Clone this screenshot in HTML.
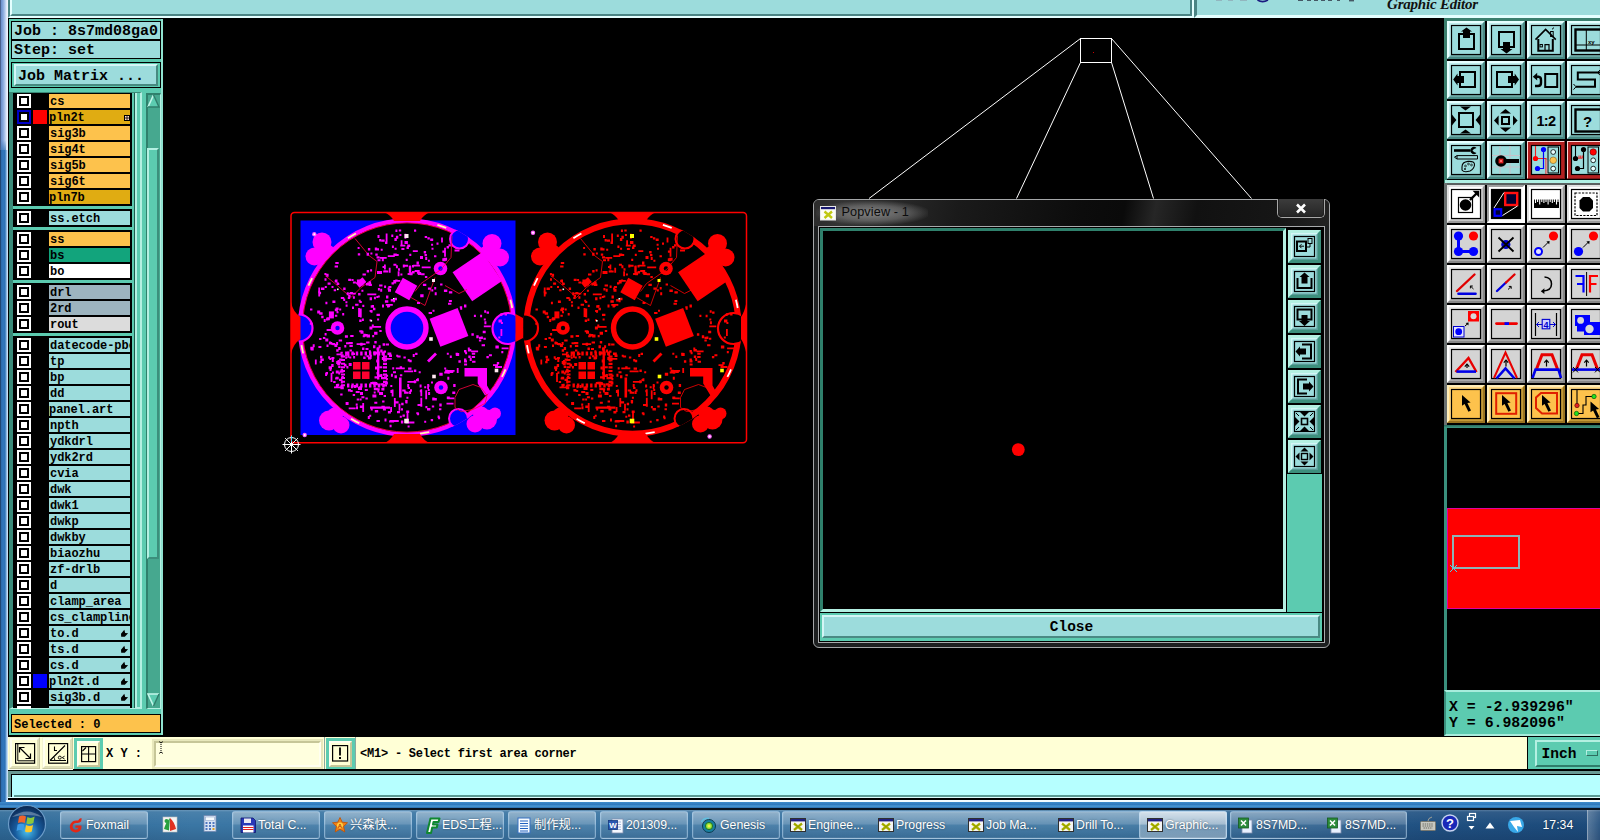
<!DOCTYPE html>
<html><head><meta charset="utf-8"><title>Graphic Editor</title>
<style>
html,body{margin:0;padding:0}
body{width:1600px;height:840px;overflow:hidden;background:#000;position:relative;font-family:"Liberation Mono",monospace;}
div,svg,span{position:absolute;box-sizing:border-box}
.m{font-family:"Liberation Mono",monospace;font-weight:bold;color:#000;white-space:pre;line-height:1}
.tb{font-family:"Liberation Sans","Noto Sans CJK SC",sans-serif;color:#fff;font-size:14px;white-space:pre;line-height:1}

.tbb{border:1px solid rgba(190,220,245,.55);border-radius:3px;background:linear-gradient(180deg,rgba(255,255,255,.42) 0,rgba(255,255,255,.25) 45%,rgba(255,255,255,.12) 52%,rgba(255,255,255,.05) 100%);box-shadow:inset 0 0 0 1px rgba(255,255,255,.08)}
.tbt{font-family:"Liberation Sans","Noto Sans CJK SC",sans-serif;color:#fff;font-size:12.3px;white-space:pre;line-height:1;text-shadow:0 0 2px rgba(0,0,0,.5)}
</style></head>
<body>
<!-- s_frame -->
<div style="left:0px;top:0px;width:8px;height:150px;background:linear-gradient(90deg,#2a3654 0,#6a8ecb 1px,#86a8dc 3px,#b4caee 5px,#dfe9fa 6.5px,#f4f8ff 8px);"></div>
<div style="left:0px;top:140px;width:8px;height:16px;background:linear-gradient(180deg,rgba(47,112,178,0),rgba(47,112,178,1));left:1px;width:5px;"></div>
<div style="left:0px;top:150px;width:8px;height:690px;background:linear-gradient(90deg,#14243c 0,#2b68aa 1px,#3277bc 3px,#2f72b6 5px,#8fbbe6 6.5px,#e4f0fc 8px);"></div>
<div style="left:8px;top:0px;width:1186px;height:18px;background:#9cdcdc;border-left:2px solid #4b8585;border-right:2px solid #e4ffff;border-bottom:2px solid #e4ffff;"><div style="left:0px;top:0px;width:1182px;height:16px;background:#9cdcdc;border-left:2px solid #e4ffff;border-right:2px solid #4b8585;border-bottom:2px solid #4b8585;"></div></div>
<div style="left:1194px;top:0px;width:406px;height:18px;background:#9cdcdc;border-left:3px solid #4b8585;border-bottom:3px solid #e4ffff;"></div>
<span style="left:1387px;top:-3.2px;font-family:'Liberation Serif',serif;font-style:italic;font-weight:bold;font-size:15px;color:#111;white-space:pre;line-height:1;letter-spacing:-0.2px">Graphic Editor</span>
<svg style="left:1210px;top:0px;" width="150" height="4" viewBox="1210 0 150 4"><g fill="#8a98a8" opacity=".55"><rect x="1216" y="0" width="6" height="1"/><rect x="1228" y="0" width="5" height="1"/><rect x="1240" y="0" width="7" height="1"/></g><path d="M1257.5 0 Q1262.5 3.2 1268 0" fill="none" stroke="#1a1a80" stroke-width="1.6"/><g fill="#303848" opacity=".8"><rect x="1298" y="0" width="5" height="1"/><rect x="1307" y="0" width="4" height="1"/><rect x="1314" y="0" width="4" height="1"/><rect x="1321" y="0" width="4" height="1"/><rect x="1328" y="0" width="4" height="1"/><rect x="1337" y="0" width="3" height="1"/><rect x="1349" y="0" width="5" height="1.4"/></g></svg>
<!-- s_left -->
<div style="left:8px;top:18px;width:156px;height:719px;background:#000;"></div>
<div style="left:9px;top:19px;width:154px;height:716px;background:#5ccbb0;border-right:2px solid #8fe2cf;"></div>
<div style="left:11px;top:21px;width:150px;height:19px;background:#9cdcdc;border:1px solid #000;"><span class="m" style="left:2px;top:2.3px;font-size:15px;letter-spacing:0px">Job : 8s7md08ga0</span></div>
<div style="left:11px;top:40px;width:150px;height:19px;background:#9cdcdc;border:1px solid #000;"><span class="m" style="left:2px;top:2.3px;font-size:15px;">Step: set</span></div>
<div style="left:11px;top:62px;width:150px;height:26px;background:#5ccbb0;border:1px solid #000;"></div>
<div style="left:14px;top:64px;width:144px;height:22px;background:#9cdcdc;border-style:solid;border-width:2px;border-color:#d4f6f6 #478a80 #478a80 #d4f6f6;"><span class="m" style="left:2px;top:3px;font-size:15px;">Job Matrix ...</span></div>
<div style="left:9px;top:92px;width:133px;height:617px;background:#5ccbb0;border-left:4px solid #3a8a78;border-top:1px solid #3a8a78;border-right:2px solid #b4f0e2;border-bottom:2px solid #b4f0e2;"></div>
<div style="left:13px;top:93px;width:124px;height:615px;background:#5ccbb0;border-right:2px solid #b4f0e2;"></div>
<div style="left:134px;top:93px;width:1px;height:615px;background:#1f5a4c;"></div>
<div style="left:13px;top:93px;width:119px;height:615px;background:#000;"></div>
<div style="left:17px;top:94px;width:14px;height:14px;background:#fff;"><div style="left:2px;top:2px;width:10px;height:10px;background:#000;"><div style="left:2px;top:2px;width:6px;height:6px;background:#fff;"></div></div></div>
<div style="left:49px;top:94px;width:81px;height:14px;background:#fdc24c;overflow:hidden;"><span class="m" style="left:1px;top:2px;font-size:12px;letter-spacing:-0.05px">cs</span></div>
<div style="left:17px;top:110px;width:14px;height:14px;background:#0000c8;"><div style="left:2px;top:2px;width:10px;height:10px;background:#000;"><div style="left:2px;top:2px;width:6px;height:6px;background:#fff;"></div></div></div>
<div style="left:33px;top:110px;width:14px;height:14px;background:#ff0000;"></div>
<div style="left:49px;top:110px;width:81px;height:14px;background:#e0ac12;overflow:hidden;"><span class="m" style="left:0px;top:2px;font-size:12px;letter-spacing:-0.05px">pln2t</span><svg style="left:75px;top:5px;" width="6" height="6"><rect x="0" y="0" width="6" height="6" fill="#000"/><rect x="1" y="1" width="1.6" height="1.6" fill="#fdc"/><rect x="3.4" y="1" width="1.6" height="1.6" fill="#fdc"/><rect x="1" y="3.4" width="1.6" height="1.6" fill="#fdc"/><rect x="3.4" y="3.4" width="1.6" height="1.6" fill="#fdc"/></svg></div>
<div style="left:17px;top:126px;width:14px;height:14px;background:#fff;"><div style="left:2px;top:2px;width:10px;height:10px;background:#000;"><div style="left:2px;top:2px;width:6px;height:6px;background:#fff;"></div></div></div>
<div style="left:49px;top:126px;width:81px;height:14px;background:#fdc24c;overflow:hidden;"><span class="m" style="left:1px;top:2px;font-size:12px;letter-spacing:-0.05px">sig3b</span></div>
<div style="left:17px;top:142px;width:14px;height:14px;background:#fff;"><div style="left:2px;top:2px;width:10px;height:10px;background:#000;"><div style="left:2px;top:2px;width:6px;height:6px;background:#fff;"></div></div></div>
<div style="left:49px;top:142px;width:81px;height:14px;background:#fdc24c;overflow:hidden;"><span class="m" style="left:1px;top:2px;font-size:12px;letter-spacing:-0.05px">sig4t</span></div>
<div style="left:17px;top:158px;width:14px;height:14px;background:#fff;"><div style="left:2px;top:2px;width:10px;height:10px;background:#000;"><div style="left:2px;top:2px;width:6px;height:6px;background:#fff;"></div></div></div>
<div style="left:49px;top:158px;width:81px;height:14px;background:#fdc24c;overflow:hidden;"><span class="m" style="left:1px;top:2px;font-size:12px;letter-spacing:-0.05px">sig5b</span></div>
<div style="left:17px;top:174px;width:14px;height:14px;background:#fff;"><div style="left:2px;top:2px;width:10px;height:10px;background:#000;"><div style="left:2px;top:2px;width:6px;height:6px;background:#fff;"></div></div></div>
<div style="left:49px;top:174px;width:81px;height:14px;background:#fdc24c;overflow:hidden;"><span class="m" style="left:1px;top:2px;font-size:12px;letter-spacing:-0.05px">sig6t</span></div>
<div style="left:17px;top:190px;width:14px;height:14px;background:#fff;"><div style="left:2px;top:2px;width:10px;height:10px;background:#000;"><div style="left:2px;top:2px;width:6px;height:6px;background:#fff;"></div></div></div>
<div style="left:49px;top:190px;width:81px;height:14px;background:#e0ac12;overflow:hidden;"><span class="m" style="left:0px;top:2px;font-size:12px;letter-spacing:-0.05px">pln7b</span></div>
<div style="left:17px;top:211px;width:14px;height:14px;background:#fff;"><div style="left:2px;top:2px;width:10px;height:10px;background:#000;"><div style="left:2px;top:2px;width:6px;height:6px;background:#fff;"></div></div></div>
<div style="left:49px;top:211px;width:81px;height:14px;background:#9cdcdc;overflow:hidden;"><span class="m" style="left:1px;top:2px;font-size:12px;letter-spacing:-0.05px">ss.etch</span></div>
<div style="left:17px;top:232px;width:14px;height:14px;background:#fff;"><div style="left:2px;top:2px;width:10px;height:10px;background:#000;"><div style="left:2px;top:2px;width:6px;height:6px;background:#fff;"></div></div></div>
<div style="left:49px;top:232px;width:81px;height:14px;background:#fdc24c;overflow:hidden;"><span class="m" style="left:1px;top:2px;font-size:12px;letter-spacing:-0.05px">ss</span></div>
<div style="left:17px;top:248px;width:14px;height:14px;background:#fff;"><div style="left:2px;top:2px;width:10px;height:10px;background:#000;"><div style="left:2px;top:2px;width:6px;height:6px;background:#fff;"></div></div></div>
<div style="left:49px;top:248px;width:81px;height:14px;background:#12a47c;overflow:hidden;"><span class="m" style="left:1px;top:2px;font-size:12px;letter-spacing:-0.05px">bs</span></div>
<div style="left:17px;top:264px;width:14px;height:14px;background:#fff;"><div style="left:2px;top:2px;width:10px;height:10px;background:#000;"><div style="left:2px;top:2px;width:6px;height:6px;background:#fff;"></div></div></div>
<div style="left:49px;top:264px;width:81px;height:14px;background:#ffffff;overflow:hidden;"><span class="m" style="left:1px;top:2px;font-size:12px;letter-spacing:-0.05px">bo</span></div>
<div style="left:17px;top:285px;width:14px;height:14px;background:#fff;"><div style="left:2px;top:2px;width:10px;height:10px;background:#000;"><div style="left:2px;top:2px;width:6px;height:6px;background:#fff;"></div></div></div>
<div style="left:49px;top:285px;width:81px;height:14px;background:#9db4bf;overflow:hidden;"><span class="m" style="left:1px;top:2px;font-size:12px;letter-spacing:-0.05px">drl</span></div>
<div style="left:17px;top:301px;width:14px;height:14px;background:#fff;"><div style="left:2px;top:2px;width:10px;height:10px;background:#000;"><div style="left:2px;top:2px;width:6px;height:6px;background:#fff;"></div></div></div>
<div style="left:49px;top:301px;width:81px;height:14px;background:#9db4bf;overflow:hidden;"><span class="m" style="left:1px;top:2px;font-size:12px;letter-spacing:-0.05px">2rd</span></div>
<div style="left:17px;top:317px;width:14px;height:14px;background:#fff;"><div style="left:2px;top:2px;width:10px;height:10px;background:#000;"><div style="left:2px;top:2px;width:6px;height:6px;background:#fff;"></div></div></div>
<div style="left:49px;top:317px;width:81px;height:14px;background:#dcdcdc;overflow:hidden;"><span class="m" style="left:1px;top:2px;font-size:12px;letter-spacing:-0.05px">rout</span></div>
<div style="left:17px;top:338px;width:14px;height:14px;background:#fff;"><div style="left:2px;top:2px;width:10px;height:10px;background:#000;"><div style="left:2px;top:2px;width:6px;height:6px;background:#fff;"></div></div></div>
<div style="left:49px;top:338px;width:81px;height:14px;background:#9cdcdc;overflow:hidden;"><span class="m" style="left:1px;top:2px;font-size:12px;letter-spacing:-0.05px">datecode-pbc</span></div>
<div style="left:17px;top:354px;width:14px;height:14px;background:#fff;"><div style="left:2px;top:2px;width:10px;height:10px;background:#000;"><div style="left:2px;top:2px;width:6px;height:6px;background:#fff;"></div></div></div>
<div style="left:49px;top:354px;width:81px;height:14px;background:#9cdcdc;overflow:hidden;"><span class="m" style="left:1px;top:2px;font-size:12px;letter-spacing:-0.05px">tp</span></div>
<div style="left:17px;top:370px;width:14px;height:14px;background:#fff;"><div style="left:2px;top:2px;width:10px;height:10px;background:#000;"><div style="left:2px;top:2px;width:6px;height:6px;background:#fff;"></div></div></div>
<div style="left:49px;top:370px;width:81px;height:14px;background:#9cdcdc;overflow:hidden;"><span class="m" style="left:1px;top:2px;font-size:12px;letter-spacing:-0.05px">bp</span></div>
<div style="left:17px;top:386px;width:14px;height:14px;background:#fff;"><div style="left:2px;top:2px;width:10px;height:10px;background:#000;"><div style="left:2px;top:2px;width:6px;height:6px;background:#fff;"></div></div></div>
<div style="left:49px;top:386px;width:81px;height:14px;background:#9cdcdc;overflow:hidden;"><span class="m" style="left:1px;top:2px;font-size:12px;letter-spacing:-0.05px">dd</span></div>
<div style="left:17px;top:402px;width:14px;height:14px;background:#fff;"><div style="left:2px;top:2px;width:10px;height:10px;background:#000;"><div style="left:2px;top:2px;width:6px;height:6px;background:#fff;"></div></div></div>
<div style="left:49px;top:402px;width:81px;height:14px;background:#9cdcdc;overflow:hidden;"><span class="m" style="left:0px;top:2px;font-size:12px;letter-spacing:-0.05px">panel.art</span></div>
<div style="left:17px;top:418px;width:14px;height:14px;background:#fff;"><div style="left:2px;top:2px;width:10px;height:10px;background:#000;"><div style="left:2px;top:2px;width:6px;height:6px;background:#fff;"></div></div></div>
<div style="left:49px;top:418px;width:81px;height:14px;background:#9cdcdc;overflow:hidden;"><span class="m" style="left:1px;top:2px;font-size:12px;letter-spacing:-0.05px">npth</span></div>
<div style="left:17px;top:434px;width:14px;height:14px;background:#fff;"><div style="left:2px;top:2px;width:10px;height:10px;background:#000;"><div style="left:2px;top:2px;width:6px;height:6px;background:#fff;"></div></div></div>
<div style="left:49px;top:434px;width:81px;height:14px;background:#9cdcdc;overflow:hidden;"><span class="m" style="left:1px;top:2px;font-size:12px;letter-spacing:-0.05px">ydkdrl</span></div>
<div style="left:17px;top:450px;width:14px;height:14px;background:#fff;"><div style="left:2px;top:2px;width:10px;height:10px;background:#000;"><div style="left:2px;top:2px;width:6px;height:6px;background:#fff;"></div></div></div>
<div style="left:49px;top:450px;width:81px;height:14px;background:#9cdcdc;overflow:hidden;"><span class="m" style="left:1px;top:2px;font-size:12px;letter-spacing:-0.05px">ydk2rd</span></div>
<div style="left:17px;top:466px;width:14px;height:14px;background:#fff;"><div style="left:2px;top:2px;width:10px;height:10px;background:#000;"><div style="left:2px;top:2px;width:6px;height:6px;background:#fff;"></div></div></div>
<div style="left:49px;top:466px;width:81px;height:14px;background:#9cdcdc;overflow:hidden;"><span class="m" style="left:1px;top:2px;font-size:12px;letter-spacing:-0.05px">cvia</span></div>
<div style="left:17px;top:482px;width:14px;height:14px;background:#fff;"><div style="left:2px;top:2px;width:10px;height:10px;background:#000;"><div style="left:2px;top:2px;width:6px;height:6px;background:#fff;"></div></div></div>
<div style="left:49px;top:482px;width:81px;height:14px;background:#9cdcdc;overflow:hidden;"><span class="m" style="left:1px;top:2px;font-size:12px;letter-spacing:-0.05px">dwk</span></div>
<div style="left:17px;top:498px;width:14px;height:14px;background:#fff;"><div style="left:2px;top:2px;width:10px;height:10px;background:#000;"><div style="left:2px;top:2px;width:6px;height:6px;background:#fff;"></div></div></div>
<div style="left:49px;top:498px;width:81px;height:14px;background:#9cdcdc;overflow:hidden;"><span class="m" style="left:1px;top:2px;font-size:12px;letter-spacing:-0.05px">dwk1</span></div>
<div style="left:17px;top:514px;width:14px;height:14px;background:#fff;"><div style="left:2px;top:2px;width:10px;height:10px;background:#000;"><div style="left:2px;top:2px;width:6px;height:6px;background:#fff;"></div></div></div>
<div style="left:49px;top:514px;width:81px;height:14px;background:#9cdcdc;overflow:hidden;"><span class="m" style="left:1px;top:2px;font-size:12px;letter-spacing:-0.05px">dwkp</span></div>
<div style="left:17px;top:530px;width:14px;height:14px;background:#fff;"><div style="left:2px;top:2px;width:10px;height:10px;background:#000;"><div style="left:2px;top:2px;width:6px;height:6px;background:#fff;"></div></div></div>
<div style="left:49px;top:530px;width:81px;height:14px;background:#9cdcdc;overflow:hidden;"><span class="m" style="left:1px;top:2px;font-size:12px;letter-spacing:-0.05px">dwkby</span></div>
<div style="left:17px;top:546px;width:14px;height:14px;background:#fff;"><div style="left:2px;top:2px;width:10px;height:10px;background:#000;"><div style="left:2px;top:2px;width:6px;height:6px;background:#fff;"></div></div></div>
<div style="left:49px;top:546px;width:81px;height:14px;background:#9cdcdc;overflow:hidden;"><span class="m" style="left:1px;top:2px;font-size:12px;letter-spacing:-0.05px">biaozhu</span></div>
<div style="left:17px;top:562px;width:14px;height:14px;background:#fff;"><div style="left:2px;top:2px;width:10px;height:10px;background:#000;"><div style="left:2px;top:2px;width:6px;height:6px;background:#fff;"></div></div></div>
<div style="left:49px;top:562px;width:81px;height:14px;background:#9cdcdc;overflow:hidden;"><span class="m" style="left:1px;top:2px;font-size:12px;letter-spacing:-0.05px">zf-drlb</span></div>
<div style="left:17px;top:578px;width:14px;height:14px;background:#fff;"><div style="left:2px;top:2px;width:10px;height:10px;background:#000;"><div style="left:2px;top:2px;width:6px;height:6px;background:#fff;"></div></div></div>
<div style="left:49px;top:578px;width:81px;height:14px;background:#9cdcdc;overflow:hidden;"><span class="m" style="left:1px;top:2px;font-size:12px;letter-spacing:-0.05px">d</span></div>
<div style="left:17px;top:594px;width:14px;height:14px;background:#fff;"><div style="left:2px;top:2px;width:10px;height:10px;background:#000;"><div style="left:2px;top:2px;width:6px;height:6px;background:#fff;"></div></div></div>
<div style="left:49px;top:594px;width:81px;height:14px;background:#9cdcdc;overflow:hidden;"><span class="m" style="left:1px;top:2px;font-size:12px;letter-spacing:-0.05px">clamp_area</span></div>
<div style="left:17px;top:610px;width:14px;height:14px;background:#fff;"><div style="left:2px;top:2px;width:10px;height:10px;background:#000;"><div style="left:2px;top:2px;width:6px;height:6px;background:#fff;"></div></div></div>
<div style="left:49px;top:610px;width:81px;height:14px;background:#9cdcdc;overflow:hidden;"><span class="m" style="left:1px;top:2px;font-size:12px;letter-spacing:-0.05px">cs_clampline</span></div>
<div style="left:17px;top:626px;width:14px;height:14px;background:#fff;"><div style="left:2px;top:2px;width:10px;height:10px;background:#000;"><div style="left:2px;top:2px;width:6px;height:6px;background:#fff;"></div></div></div>
<div style="left:49px;top:626px;width:81px;height:14px;background:#9cdcdc;overflow:hidden;"><span class="m" style="left:1px;top:2px;font-size:12px;letter-spacing:-0.05px">to.d</span><svg style="left:71px;top:3px;" width="9" height="9"><path d="M4.3 0.8 L5.2 3.9 L8.1 4.3 L4.8 7.7 L1.2 7.7 L1 4.8 Z" fill="#000"/></svg></div>
<div style="left:17px;top:642px;width:14px;height:14px;background:#fff;"><div style="left:2px;top:2px;width:10px;height:10px;background:#000;"><div style="left:2px;top:2px;width:6px;height:6px;background:#fff;"></div></div></div>
<div style="left:49px;top:642px;width:81px;height:14px;background:#9cdcdc;overflow:hidden;"><span class="m" style="left:1px;top:2px;font-size:12px;letter-spacing:-0.05px">ts.d</span><svg style="left:71px;top:3px;" width="9" height="9"><path d="M4.3 0.8 L5.2 3.9 L8.1 4.3 L4.8 7.7 L1.2 7.7 L1 4.8 Z" fill="#000"/></svg></div>
<div style="left:17px;top:658px;width:14px;height:14px;background:#fff;"><div style="left:2px;top:2px;width:10px;height:10px;background:#000;"><div style="left:2px;top:2px;width:6px;height:6px;background:#fff;"></div></div></div>
<div style="left:49px;top:658px;width:81px;height:14px;background:#9cdcdc;overflow:hidden;"><span class="m" style="left:1px;top:2px;font-size:12px;letter-spacing:-0.05px">cs.d</span><svg style="left:71px;top:3px;" width="9" height="9"><path d="M4.3 0.8 L5.2 3.9 L8.1 4.3 L4.8 7.7 L1.2 7.7 L1 4.8 Z" fill="#000"/></svg></div>
<div style="left:17px;top:674px;width:14px;height:14px;background:#fff;"><div style="left:2px;top:2px;width:10px;height:10px;background:#000;"><div style="left:2px;top:2px;width:6px;height:6px;background:#fff;"></div></div></div>
<div style="left:33px;top:674px;width:14px;height:14px;background:#0000ff;"></div>
<div style="left:49px;top:674px;width:81px;height:14px;background:#9cdcdc;overflow:hidden;"><span class="m" style="left:0px;top:2px;font-size:12px;letter-spacing:-0.05px">pln2t.d</span><svg style="left:71px;top:3px;" width="9" height="9"><path d="M4.3 0.8 L5.2 3.9 L8.1 4.3 L4.8 7.7 L1.2 7.7 L1 4.8 Z" fill="#000"/></svg></div>
<div style="left:17px;top:690px;width:14px;height:14px;background:#fff;"><div style="left:2px;top:2px;width:10px;height:10px;background:#000;"><div style="left:2px;top:2px;width:6px;height:6px;background:#fff;"></div></div></div>
<div style="left:49px;top:690px;width:81px;height:14px;background:#9cdcdc;overflow:hidden;"><span class="m" style="left:1px;top:2px;font-size:12px;letter-spacing:-0.05px">sig3b.d</span><svg style="left:71px;top:3px;" width="9" height="9"><path d="M4.3 0.8 L5.2 3.9 L8.1 4.3 L4.8 7.7 L1.2 7.7 L1 4.8 Z" fill="#000"/></svg></div>
<div style="left:17px;top:706px;width:14px;height:3px;background:#fff;"></div>
<div style="left:49px;top:706px;width:81px;height:3px;background:#9cdcdc;overflow:hidden;"></div>
<div style="left:13px;top:206px;width:119px;height:3px;background:#5ccbb0;"></div>
<div style="left:13px;top:227px;width:119px;height:3px;background:#5ccbb0;"></div>
<div style="left:13px;top:280px;width:119px;height:3px;background:#5ccbb0;"></div>
<div style="left:13px;top:333px;width:119px;height:3px;background:#5ccbb0;"></div>
<div style="left:146px;top:93px;width:15px;height:616px;background:#46a88f;border-style:solid;border-width:2px 1px 1px 2px;border-color:#2f806c #b4f0e2 #b4f0e2 #2f806c;"></div>
<svg style="left:147px;top:94px;" width="13" height="15"><path d="M6.5 1 L1 13 L12 13 Z" fill="#5ccbb0"/><path d="M6.5 1 L1 13" stroke="#c4f6ea" stroke-width="1.6" fill="none"/><path d="M1 13 L12 13 L6.5 1" stroke="#2f7d6b" stroke-width="1.4" fill="none"/></svg>
<svg style="left:147px;top:692px;" width="13" height="15"><path d="M6.5 14 L1 2 L12 2 Z" fill="#5ccbb0"/><path d="M12 2 L1 2 L6.5 14" stroke="#c4f6ea" stroke-width="1.6" fill="none"/><path d="M6.5 14 L12 2" stroke="#2f7d6b" stroke-width="1.4" fill="none"/></svg>
<div style="left:147px;top:148px;width:12px;height:411px;background:#5ccbb0;border-style:solid;border-width:2px;border-color:#b4f0e2 #3c8f7c #3c8f7c #b4f0e2;"></div>
<div style="left:11px;top:714px;width:150px;height:19px;background:#fdc24c;border:1px solid #000;"><span class="m" style="left:2px;top:3.5px;font-size:12px;">Selected : 0</span></div>
<!-- s_canvas -->
<svg style="left:280px;top:200px;" width="480" height="260" viewBox="280 200 480 260"><defs><clipPath id="bc"><rect x="-106.5" y="-107" width="215" height="214.5"/></clipPath><clipPath id="dc"><circle cx="0" cy="0" r="109.2"/></clipPath></defs><g transform="translate(407,327.5)"><rect x="-106.5" y="-107" width="215" height="214.5" fill="#0000ff"/><circle cx="-85" cy="-85.5" r="9.5" fill="#ff00ff"/><circle cx="-92.5" cy="-71" r="9" fill="#ff00ff"/><circle cx="-80" cy="-75" r="8" fill="#ff00ff"/><circle cx="-71" cy="-70" r="6" fill="#ff00ff"/><circle cx="85" cy="-84" r="9.5" fill="#ff00ff"/><circle cx="93" cy="-70" r="9" fill="#ff00ff"/><circle cx="80" cy="-74" r="8" fill="#ff00ff"/><circle cx="71" cy="-70" r="6" fill="#ff00ff"/><circle cx="-78" cy="93" r="10" fill="#ff00ff"/><circle cx="-66" cy="97.5" r="8.5" fill="#ff00ff"/><circle cx="-72" cy="88" r="8" fill="#ff00ff"/><circle cx="80" cy="92" r="10" fill="#ff00ff"/><circle cx="68" cy="96.5" r="8.5" fill="#ff00ff"/><circle cx="74" cy="87" r="8" fill="#ff00ff"/><circle cx="88" cy="86" r="6" fill="#ff00ff"/><circle cx="0" cy="0" r="107.0" fill="#000" stroke="#ff00ff" stroke-width="4.4"/><circle cx="0" cy="0" r="104.6" fill="none" stroke="#ff0040" stroke-width="0.9"/><g clip-path="url(#dc)"><circle cx="-108" cy="0.5" r="13.5" fill="#0000ff" stroke="#ff00ff" stroke-width="2.2"/><circle cx="101" cy="1" r="15.5" fill="#0000ff" stroke="#ff00ff" stroke-width="2.2"/><circle cx="52.5" cy="-88.5" r="9.5" fill="#0000ff" stroke="#ff00ff" stroke-width="2"/><circle cx="51.5" cy="91" r="9.5" fill="#0000ff" stroke="#ff00ff" stroke-width="2"/></g><path d="M-59.1 -89.2 A107 107 0 0 1 -51.1 -94.0" stroke="#fff4b0" stroke-width="1.8" fill="none"/><path d="M30.4 -102.6 A107 107 0 0 1 39.2 -99.6" stroke="#fff4b0" stroke-width="1.8" fill="none"/><path d="M-98.5 -41.8 A107 107 0 0 1 -94.9 -49.4" stroke="#fff4b0" stroke-width="1.8" fill="none"/><path d="M103.4 -27.7 A107 107 0 0 1 105.2 -19.5" stroke="#fff4b0" stroke-width="1.8" fill="none"/><path d="M-103.8 25.9 A107 107 0 0 1 -105.5 17.7" stroke="#fff4b0" stroke-width="1.8" fill="none"/><path d="M-47.7 95.8 A107 107 0 0 1 -55.9 91.2" stroke="#fff4b0" stroke-width="1.8" fill="none"/><path d="M22.2 104.7 A107 107 0 0 1 13.0 106.2" stroke="#fff4b0" stroke-width="1.8" fill="none"/><path d="M98.5 41.8 A107 107 0 0 1 94.9 49.4" stroke="#fff4b0" stroke-width="1.8" fill="none"/><circle cx="0" cy="0.5" r="19" fill="#0000ff" stroke="#ff00ff" stroke-width="5.4"/><rect x="-18.0" y="-17.5" width="36.0" height="35.0" fill="#ff00ff" transform="translate(70.3,-50.9) rotate(-34)"/><rect x="-15.0" y="-15.0" width="30.0" height="30.0" fill="#ff00ff" transform="translate(42.0,-0.2) rotate(-21)"/><rect x="-8.2" y="-8.2" width="16.5" height="16.5" fill="#ff00ff" transform="translate(-1.0,-38.5) rotate(29)"/><rect x="-4.5" y="-3.0" width="9.0" height="6.0" fill="#ff00ff" transform="translate(-46.0,-45.0) rotate(-40)"/><rect x="-2.5" y="-3.5" width="5.0" height="7.0" fill="#ff00ff" transform="translate(-75.6,-12.6) rotate(0)"/><rect x="-2.5" y="-1.5" width="5.0" height="3.0" fill="#ff00ff" transform="translate(-27.5,-55.0) rotate(0)"/><circle cx="33.5" cy="-59" r="6.8" fill="#ff00ff"/><circle cx="33.5" cy="-59" r="2.2" fill="#0000ff"/><circle cx="-69.5" cy="0.5" r="6.8" fill="#ff00ff"/><circle cx="-69.5" cy="0.5" r="2.2" fill="#0000ff"/><circle cx="34" cy="60" r="6.8" fill="#ff00ff"/><circle cx="34" cy="60" r="2.2" fill="#0000ff"/><path d="M57.5 40.5 H80 V58 L84 65 L78 68 L70.7 56 V49 H57.5 Z" fill="#ff00ff"/><rect x="-54" y="34.5" width="7.5" height="7.5" fill="#ff0030"/><rect x="-45" y="34.5" width="7.5" height="7.5" fill="#ff0030"/><rect x="-54" y="44" width="7.5" height="7.5" fill="#ff0030"/><rect x="-45" y="44" width="7.5" height="7.5" fill="#ff0030"/><path d="M-60.0 24h2.4v4h-2.4z M-60.0 56h2.4v4h-2.4zM-66 28.0h4v2h-4z M-24 28.0h4v2.2h-4zM-55.6 24h2.4v4h-2.4z M-55.6 56h2.4v4h-2.4zM-66 31.6h4v2h-4z M-24 31.6h4v2.2h-4zM-51.2 24h2.4v4h-2.4z M-51.2 56h2.4v4h-2.4zM-66 35.2h4v2h-4z M-24 35.2h4v2.2h-4zM-46.8 24h2.4v4h-2.4z M-46.8 56h2.4v4h-2.4zM-66 38.8h4v2h-4z M-24 38.8h4v2.2h-4zM-42.4 24h2.4v4h-2.4z M-42.4 56h2.4v4h-2.4zM-66 42.4h4v2h-4z M-24 42.4h4v2.2h-4zM-38.0 24h2.4v4h-2.4z M-38.0 56h2.4v4h-2.4zM-66 46.0h4v2h-4z M-24 46.0h4v2.2h-4zM-33.6 24h2.4v4h-2.4z M-33.6 56h2.4v4h-2.4zM-66 49.6h4v2h-4z M-24 49.6h4v2.2h-4zM-29.2 24h2.4v4h-2.4z M-29.2 56h2.4v4h-2.4zM-66 53.2h4v2h-4z M-24 53.2h4v2.2h-4zM-24.8 24h2.4v4h-2.4z M-24.8 56h2.4v4h-2.4zM-66 56.8h4v2h-4z M-24 56.8h4v2.2h-4z" fill="#ff00ff"/><path d="M-30 20 h2.4 v32 h-2.4z M-8 50 h2.6 v20 h-2.6z M-37 79 h20 v2.2 h-20z M20 33 l8 -8 l2 2 l-8 8z" fill="#ff00ff"/><path d="M-52 -89 L-38 -72 L-30 -66 L-32 -50 L-46 -40 L-56 -30 L-72 -44 L-82 -52 M45 -92 L44 -70 L34 -58 L14 -44 L8 -36 M4 -30 L18 -22 L28 -50 M38 -42 L52 -34 L60 -38 M48 70 L52 62 L66 57 L74 60 L80 68 L78 76 L66 82 L54 84 L48 80 Z" fill="none" stroke="#ff0040" stroke-width="0.8"/><path d="M-70.8 21.8h2.4v2.4h-2.4zM-36.3 -22.2h3v2.4h-3zM-9.8 28.1h3.4v2h-3.4zM-5.6 -79.6h3v2h-3zM9.9 -55.7h3v2h-3zM-44.5 -54.0h3.4v2h-3.4zM-17.4 97.3h2v2.4h-2zM6.8 52.8h2v3h-2zM-73.8 53.4h2.4v2h-2.4zM23.7 91.4h2.4v2.4h-2.4zM-21.4 16.1h3.4v2h-3.4zM-3.6 29.0h2.4v2h-2.4zM0.7 31.5h2v2.4h-2zM-40.9 14.0h3.4v2h-3.4zM-82.6 -54.4h2v2h-2zM76.8 -2.0h7v1.8h-7zM-4.5 86.9h2.4v2.4h-2.4zM-53.0 57.4h2v3h-2zM-82.2 -41.6h2v2h-2zM10.5 76.6h3.4v2h-3.4zM-23.8 -56.9h5v1.8h-5zM94.3 23.4h2v2.4h-2zM-11.2 39.9h9v1.8h-9zM-17.9 93.1h5v1.8h-5zM40.4 43.8h2.4v2.4h-2.4zM-27.3 -70.6h7v1.8h-7zM-29.5 -92.6h2v3h-2zM-84.1 9.4h2.4v2h-2.4zM65.1 33.3h3.4v2h-3.4zM-6.7 -82.8h5v1.8h-5zM23.2 -89.0h3v2.4h-3zM-2.9 63.8h2.4v2.4h-2.4zM-23.0 -62.9h1.8v5h-1.8zM-10.8 27.2h2v2h-2zM-36.9 -58.3h2v2.4h-2zM-19.4 -40.1h2v2.4h-2zM-87.3 33.4h2.4v2.4h-2.4zM20.7 61.6h2v2h-2zM-48.3 -27.8h2v2h-2zM47.5 -77.9h5v1.8h-5zM-80.5 -10.2h3.4v3h-3.4zM-19.2 -72.3h7v1.8h-7zM32.0 80.7h2.4v2h-2.4zM-38.3 -46.3h2v2h-2zM-41.3 6.5h2v2.4h-2zM13.0 -71.6h3v3h-3zM2.4 -62.1h1.8v9h-1.8zM30.6 88.1h2v2.4h-2zM-40.3 -57.5h2.4v2.4h-2.4zM3.0 61.8h2v2.4h-2zM14.2 -54.2h3.4v2h-3.4zM57.0 32.7h3v2.4h-3zM-44.7 75.6h1.8v9h-1.8zM-81.0 -9.3h2.4v2.4h-2.4zM-32.2 -79.9h2.4v3h-2.4zM41.9 -27.6h3v2h-3zM46.2 56.6h2.4v3h-2.4zM-28.4 17.7h2v3h-2zM-40.5 27.8h2.4v2h-2.4zM49.8 40.4h1.8v5h-1.8zM-79.4 -45.1h3v2.4h-3zM-27.9 -88.5h2v2.4h-2zM35.3 -69.2h3.4v3h-3.4zM-89.8 -16.9h3v3h-3zM9.3 84.7h2.4v2h-2.4zM-37.8 87.3h2v2h-2zM-77.5 41.6h2v2h-2zM24.8 77.9h2.4v2h-2.4zM-38.5 -43.4h3.4v2h-3.4zM5.8 -77.3h5v1.8h-5zM-16.8 79.5h1.8v5h-1.8zM5.2 -56.4h2.4v2.4h-2.4zM-69.5 32.6h2v2h-2zM-4.2 -62.9h2v3h-2zM-25.8 -88.1h3.4v2.4h-3.4zM27.4 70.5h2.4v2.4h-2.4zM38.1 42.2h3v2.4h-3zM6.0 -62.8h7v1.8h-7zM93.9 -5.6h2v2h-2zM13.4 61.7h1.8v7h-1.8zM7.2 -97.7h2v2h-2zM20.4 57.1h2v2.4h-2zM-97.2 -4.8h3v2h-3zM10.0 -25.4h3v2h-3zM57.0 -23.1h2.4v3h-2.4zM89.8 34.6h2.4v2.4h-2.4zM-48.9 -34.5h2.4v2.4h-2.4zM-48.9 -19.6h1.8v9h-1.8zM1.8 -61.8h1.8v7h-1.8zM-61.8 29.3h2v2h-2zM-96.0 19.3h2v3h-2zM60.8 19.9h2v2h-2zM-24.2 30.5h9v1.8h-9zM-5.8 75.3h2.4v2.4h-2.4zM-97.0 -19.0h2.4v2h-2.4zM16.7 -76.5h2.4v2.4h-2.4zM-29.5 -68.3h3v2h-3zM0.6 98.0h2v2h-2zM9.0 51.5h2v2h-2zM-41.1 -44.4h2.4v2.4h-2.4zM-47.4 71.1h2v2h-2zM39.6 -81.5h2.4v2.4h-2.4zM-29.6 24.5h2v3h-2zM-81.6 -25.7h2v2.4h-2zM-58.8 -32.6h2.4v2h-2.4zM-67.9 30.9h3.4v2.4h-3.4zM18.4 78.4h2v2.4h-2zM5.0 -56.5h2v2h-2zM-9.0 -59.2h2v2.4h-2zM-86.0 -40.0h3.4v2.4h-3.4zM17.9 -51.6h2.4v2h-2.4zM0.6 59.5h2.4v2h-2.4zM25.2 69.9h2.4v3h-2.4zM-35.0 -22.6h2v2.4h-2zM-88.7 -40.0h1.8v9h-1.8zM-7.6 -93.6h2v2h-2zM-29.1 -39.5h2v2.4h-2zM-85.8 -11.7h2.4v2.4h-2.4zM79.6 -16.1h2.4v2.4h-2.4zM-15.1 -81.9h2v2.4h-2zM57.1 35.9h3v2h-3zM-22.0 -85.9h2.4v2.4h-2.4zM1.1 39.9h3.4v2.4h-3.4zM-26.6 55.7h3v2.4h-3zM-6.6 -54.1h2v2h-2zM-87.9 10.5h2.4v2h-2.4zM-48.2 58.7h3v2.4h-3zM6.9 42.0h2.4v2.4h-2.4zM2.6 -55.2h3v3h-3zM-6.1 93.1h2.4v3h-2.4zM-37.2 27.3h2v2.4h-2zM24.1 -83.7h2v2h-2zM-46.8 15.2h2.4v3h-2.4zM-75.1 43.9h2v2.4h-2zM13.2 -33.3h3.4v3h-3.4zM-37.5 -8.3h2v2h-2zM40.6 42.4h7v1.8h-7zM-67.8 -19.0h2v2h-2zM20.9 -40.1h3v2.4h-3zM48.6 25.2h2.4v2h-2.4zM-12.4 -29.7h2.4v2.4h-2.4zM-86.6 31.0h3.4v2.4h-3.4zM-61.6 -26.3h2v2h-2zM45.3 64.1h3v2.4h-3zM2.3 -73.8h2v2.4h-2zM-23.4 22.9h2.4v2.4h-2.4zM-9.3 -56.2h1.8v5h-1.8zM-36.6 -74.9h2v2h-2zM39.8 25.3h2v2h-2zM7.7 -57.4h5v1.8h-5zM-31.1 55.4h2v2.4h-2zM-36.3 80.1h2v3h-2zM-2.9 42.9h9v1.8h-9zM-26.6 46.5h2v3h-2zM-1.8 72.6h2.4v3h-2.4zM-54.1 -45.9h3v2h-3zM-83.3 -8.4h2v3h-2zM-30.7 -31.6h2v2h-2zM-73.3 -38.2h2.4v2h-2.4zM-71.4 -20.0h3v2.4h-3zM-2.5 -93.7h1.8v5h-1.8zM-22.5 91.0h2v3h-2zM-71.9 50.0h3.4v2h-3.4zM-40.4 -74.8h2.4v3h-2.4zM21.1 64.4h2v3h-2zM-37.4 -17.5h3v2h-3zM-51.9 -23.7h3.4v2h-3.4zM14.7 -61.1h9v1.8h-9zM-43.8 29.0h2.4v2.4h-2.4zM52.8 -21.3h2.4v2h-2.4zM79.4 28.4h2.4v2.4h-2.4zM0.6 -54.6h3v2h-3zM27.2 -40.4h2v2.4h-2zM-47.8 -7.9h2.4v2.4h-2.4zM-11.1 -91.7h2.4v3h-2.4zM15.9 -43.8h3.4v2.4h-3.4zM25.5 -17.7h2v2h-2zM-59.2 -30.6h2.4v2h-2.4zM-61.9 24.1h1.8v5h-1.8zM-44.3 7.7h2.4v2h-2.4zM-40.4 7.1h3.4v3h-3.4zM-29.2 -32.0h2v2h-2zM-81.4 44.5h2.4v2.4h-2.4zM-10.0 83.4h3v2.4h-3zM-56.1 57.8h2v3h-2zM92.7 -13.4h2v2h-2zM-18.9 -22.9h2v2.4h-2zM75.7 3.3h3v2.4h-3zM-36.5 -16.8h2v2h-2zM93.5 1.6h1.8v7h-1.8zM-29.6 62.1h2v3h-2zM36.7 -69.8h3.4v3h-3.4zM-37.4 -30.2h2.4v3h-2.4zM-46.5 3.2h3v3h-3zM74.6 16.8h3.4v2h-3.4zM69.3 7.8h2.4v3h-2.4zM-7.2 88.2h2v2h-2zM-66.2 -30.6h3.4v2h-3.4zM60.9 21.5h3.4v2.4h-3.4zM-6.3 -87.2h1.8v5h-1.8zM-80.4 1.6h7v1.8h-7zM-26.3 -78.8h2v2h-2zM7.0 -98.1h2v2.4h-2zM-60.6 38.5h2v2.4h-2zM-94.3 16.8h2v3h-2zM-1.5 73.5h2v2.4h-2zM76.8 -9.1h2v2h-2zM-45.6 68.8h3v2h-3zM-71.1 56.6h2.4v2.4h-2.4zM12.6 57.0h2v3h-2zM-62.1 7.8h3v2.4h-3zM-68.3 11.9h3.4v2h-3.4zM17.2 58.8h2v2h-2zM-4.8 61.9h3.4v2h-3.4zM-24.9 29.7h2.4v2h-2.4zM-15.7 -93.0h2v2.4h-2zM-87.0 28.3h2.4v2.4h-2.4zM-24.9 73.1h2.4v2h-2.4zM-35.2 -3.1h2v2.4h-2zM-81.7 11.0h3v3h-3zM-12.4 -79.8h2v2h-2zM-64.8 -14.5h2v2.4h-2zM-19.5 25.0h2.4v2.4h-2.4zM-1.3 -68.8h2v2.4h-2zM-55.0 -21.0h2v2.4h-2zM-20.0 -22.0h2.4v2h-2.4zM57.0 22.6h2.4v2.4h-2.4zM-7.3 38.7h2.4v2h-2.4zM40.3 69.9h7v1.8h-7zM33.1 -43.9h2.4v2h-2.4zM58.1 24.3h2v2.4h-2zM-58.2 -34.8h7v1.8h-7zM-6.0 80.7h2v2.4h-2zM-51.0 78.7h2v3h-2zM5.7 26.6h2v3h-2zM61.3 28.1h2.4v2.4h-2.4zM-66.6 58.7h3.4v3h-3.4zM76.4 10.2h2.4v2h-2.4zM13.4 70.2h1.8v9h-1.8zM41.5 -83.3h2.4v2.4h-2.4zM41.9 -36.3h3.4v2.4h-3.4zM-50.1 -48.0h3v2.4h-3zM-19.1 83.5h3v2.4h-3zM0.2 56.4h2v3h-2zM-45.9 -44.0h2.4v2h-2.4zM-68.0 51.2h3.4v2.4h-3.4zM-39.8 -45.0h3.4v2.4h-3.4zM27.7 -35.2h2v3h-2zM-22.1 -27.2h3.4v2.4h-3.4zM42.9 43.0h3.4v2.4h-3.4zM-82.5 -49.2h2v2.4h-2zM-68.8 38.2h2.4v2.4h-2.4zM-11.6 -98.0h2v2.4h-2zM71.9 12.1h2.4v2h-2.4zM-32.2 82.5h3.4v2.4h-3.4zM-11.1 -62.3h2v3h-2zM-25.2 -68.7h2v2.4h-2zM-0.6 69.2h2v2h-2zM73.9 9.0h2v2.4h-2zM-7.1 46.7h2.4v2h-2.4zM86.0 36.8h5v1.8h-5zM-76.4 45.5h1.8v9h-1.8zM-12.5 47.8h2.4v3h-2.4zM-54.3 66.6h2.4v2h-2.4zM-87.8 -15.2h3.4v2.4h-3.4zM29.5 -85.1h2v2.4h-2zM-13.7 -47.6h7v1.8h-7zM-49.2 -74.3h2.4v2.4h-2.4zM-17.2 92.6h9v1.8h-9zM37.2 40.0h2v2h-2zM-63.8 -40.0h2.4v2.4h-2.4zM17.7 -91.6h2.4v2h-2.4zM24.0 54.1h2v2h-2zM-49.4 -80.6h2v2h-2zM-36.7 54.4h3.4v2.4h-3.4zM-30.5 -13.8h3.4v2.4h-3.4zM-88.6 18.5h3v2h-3zM-50.4 15.8h9v1.8h-9zM-96.7 19.3h3.4v3h-3.4zM-8.2 -98.1h2.4v2h-2.4zM-47.8 2.7h3.4v2h-3.4zM20.9 -67.7h2v2h-2zM-11.8 -48.1h2.4v2.4h-2.4zM64.4 5.8h2.4v2.4h-2.4zM2.3 32.3h2.4v2.4h-2.4zM62.7 30.6h2v3h-2zM88.0 38.6h7v1.8h-7zM-15.3 62.0h1.8v7h-1.8zM21.6 -15.4h3.4v2h-3.4zM-39.2 88.5h2v3h-2zM-29.7 47.0h3.4v2.4h-3.4zM11.7 43.8h2v2h-2zM-34.8 7.4h2v2.4h-2zM-45.6 -37.7h2v2h-2zM-30.4 -79.3h2.4v2.4h-2.4zM8.1 25.2h2.4v2.4h-2.4zM-39.7 -34.0h9v1.8h-9zM-13.8 -46.0h3v2h-3zM36.9 -38.0h3.4v2.4h-3.4zM-43.7 6.2h2.4v3h-2.4zM-38.3 -46.1h2.4v2.4h-2.4zM-27.9 -43.0h3.4v2h-3.4zM2.1 63.5h2v3h-2zM-0.7 64.2h2.4v2h-2.4zM-29.9 -8.9h2v2h-2zM-69.7 -44.4h2v2h-2zM-32.7 74.2h3v2h-3zM97.6 -14.5h2.4v2.4h-2.4zM-61.0 14.7h3.4v2h-3.4zM-60.3 -35.3h2v3h-2zM39.8 69.1h3v2.4h-3zM66.9 -12.8h2v2.4h-2zM91.3 9.1h2v2h-2zM-70.5 -16.2h2v2h-2zM-34.9 -1.6h9v1.8h-9zM-21.1 54.9h2v2h-2zM-96.3 20.7h3v2.4h-3zM-37.6 -0.9h3v3h-3zM-71.7 -65.6h3.4v2h-3.4zM35.4 -77.1h2v2.4h-2zM-30.5 92.4h3.4v2h-3.4zM-14.0 43.7h3v2h-3zM-81.9 45.5h2v3h-2zM-63.8 -29.0h2v2.4h-2zM-8.4 76.2h1.8v7h-1.8zM-72.1 -12.8h2.4v2h-2.4zM-61.4 74.5h3v3h-3zM-80.8 -53.7h2.4v3h-2.4zM24.3 -38.3h2v2.4h-2zM-51.3 75.9h2v2.4h-2zM34.1 -89.9h1.8v5h-1.8zM37.1 -79.7h1.8v9h-1.8zM37.2 44.1h3.4v2h-3.4zM-18.6 -41.5h3v2h-3zM-56.8 7.5h3.4v2h-3.4zM-39.1 -79.5h2.4v2.4h-2.4zM-12.6 -89.6h2.4v3h-2.4zM-18.2 -59.7h1.8v5h-1.8zM-62.4 37.0h2v2h-2zM-55.4 25.2h3.4v2.4h-3.4zM-22.9 -57.3h2.4v2h-2.4zM-57.1 -35.6h3v2h-3zM-15.5 -45.3h2.4v2.4h-2.4zM-44.7 -22.8h2v2.4h-2zM-13.6 -63.7h3v2h-3zM93.3 -14.3h2.4v2.4h-2.4zM10.1 85.3h2v2.4h-2zM-23.6 31.7h2.4v2.4h-2.4zM-92.1 32.1h1.8v5h-1.8zM91.5 -8.0h3.4v3h-3.4zM27.0 -72.3h2.4v2h-2.4zM72.0 9.2h2.4v2.4h-2.4zM-47.1 -18.9h1.8v9h-1.8zM0.2 -83.0h3v2.4h-3zM-78.4 38.7h3.4v3h-3.4zM-57.6 17.6h3.4v2h-3.4zM-27.7 38.8h3v2h-3zM20.2 56.5h1.8v5h-1.8zM40.3 49.2h2v3h-2zM-75.2 31.6h2v3h-2zM-72.4 -61.9h3.4v2h-3.4zM-27.7 2.5h2.4v2h-2.4zM73.1 -12.7h2v2.4h-2zM9.9 50.7h2v3h-2zM-30.5 -71.3h3v2.4h-3zM88.4 18.0h3.4v3h-3.4zM-75.5 -41.5h2v2h-2zM-37.8 29.1h2.4v2.4h-2.4zM-73.0 58.9h9v1.8h-9zM-41.6 69.9h2.4v2h-2.4zM-38.1 22.8h2v2.4h-2zM17.2 93.3h2v2h-2zM-58.8 -48.8h3v2.4h-3zM64.7 28.4h3.4v2h-3.4zM18.2 -70.4h2v3h-2zM12.8 62.4h2v2.4h-2zM-22.9 -41.9h2v2.4h-2zM-88.9 -36.7h2v2.4h-2zM94.6 19.9h7v1.8h-7zM-21.3 -93.9h1.8v9h-1.8zM-56.7 62.5h2.4v2h-2.4zM-14.8 39.7h2v2.4h-2zM-72.2 -18.7h3v2.4h-3zM48.8 25.5h3.4v3h-3.4zM77.2 -17.2h2v2.4h-2zM-58.3 79.9h7v1.8h-7zM5.0 -62.5h2v2.4h-2zM39.5 75.2h7v1.8h-7zM-47.2 78.0h3v2.4h-3zM-0.4 85.3h1.8v9h-1.8zM-63.1 36.3h2.4v2.4h-2.4zM41.0 -24.7h3.4v2h-3.4zM-87.9 -35.7h2v2.4h-2zM-34.0 -19.7h2.4v2.4h-2.4zM-32.9 4.3h3.4v3h-3.4zM-31.7 -74.1h2.4v2.4h-2.4zM-54.1 -31.2h2v2.4h-2zM-21.2 -23.5h7v1.8h-7zM32.3 45.3h3.4v3h-3.4zM-24.5 -61.4h2.4v2h-2.4zM24.5 -79.8h2v2h-2zM-16.1 46.2h2v3h-2zM-78.1 14.4h3.4v2.4h-3.4zM-16.3 -28.4h2.4v2.4h-2.4zM32.3 75.9h2.4v3h-2.4zM-0.5 -81.0h2.4v2.4h-2.4zM20.4 -90.3h2.4v2.4h-2.4zM-25.0 -23.0h2v3h-2zM-80.5 17.1h2v2.4h-2zM53.2 -20.2h2v2.4h-2zM-47.6 -26.5h2.4v2h-2.4zM-13.1 70.4h1.8v9h-1.8zM81.9 26.7h3v2h-3zM-45.1 -9.0h2v2.4h-2zM57.0 30.9h2.4v2.4h-2.4zM-74.6 -26.9h3v2.4h-3zM77.4 -6.3h2v3h-2zM17.5 -73.6h2.4v2.4h-2.4zM-62.7 17.5h2v2.4h-2zM-1.6 94.1h9v1.8h-9zM-32.7 13.5h2.4v2.4h-2.4zM-2.3 -62.8h3.4v2h-3.4zM64.1 23.0h7v1.8h-7zM-33.1 -30.7h2v2.4h-2zM-37.1 -43.7h2v2h-2zM-13.6 -74.0h3.4v2.4h-3.4zM42.8 28.1h2v2.4h-2zM18.3 62.7h1.8v9h-1.8zM9.5 -66.1h2.4v3h-2.4zM-66.8 65.9h2.4v2h-2.4zM-24.1 80.7h3v2.4h-3zM-26.8 -38.7h2v3h-2zM-10.7 -73.5h2.4v2h-2.4zM51.4 32.8h2.4v2.4h-2.4zM31.1 89.3h2v2.4h-2zM-70.4 -44.9h2.4v2.4h-2.4zM-0.8 83.1h3v2.4h-3zM10.8 -55.4h3.4v3h-3.4zM-11.4 73.7h3v2.4h-3zM-13.9 -27.7h2v2.4h-2zM-61.4 -23.1h2v2.4h-2zM-25.6 78.3h3.4v2.4h-3.4zM-21.0 -31.9h2.4v3h-2.4zM-82.4 5.6h2v2.4h-2zM20.0 80.6h3.4v2.4h-3.4zM-25.6 60.6h3v2.4h-3zM13.3 76.8h2v2.4h-2zM-72.3 -47.6h2.4v2.4h-2.4zM-50.3 70.9h2.4v2h-2.4zM64.8 25.2h3.4v2h-3.4zM-2.5 -86.6h3.4v3h-3.4zM-71.9 -47.9h2.4v3h-2.4zM-66.7 57.7h2.4v2h-2.4zM-55.4 -48.6h2v2h-2zM-29.7 60.8h2.4v2h-2.4zM0.4 53.5h9v1.8h-9zM-19.0 -38.7h3v3h-3zM-78.8 28.8h2v2.4h-2zM-70.5 25.9h5v1.8h-5zM-68.8 19.4h2.4v3h-2.4zM-35.1 54.2h4v2h-4zM-23.4 67.5h2.4v2h-2.4zM-71.2 42.9h3v3h-3zM-75.6 29.6h3v2h-3zM-45.0 20.1h2.4v2.4h-2.4zM-33.7 54.5h4v3h-4zM-16.6 62.4h2v3h-2zM-34.0 17.7h2.4v3h-2.4zM-47.0 64.5h3v3h-3zM-20.9 47.2h2v2h-2zM-33.3 63.9h2v2h-2zM-30.8 32.0h2v3h-2zM-66.6 24.2h2.4v2h-2.4zM-74.5 15.8h2.4v2h-2.4zM-23.0 48.8h3v2.4h-3zM-22.1 54.1h3v3h-3zM-70.9 14.4h2v3h-2zM-59.1 61.5h3v2.4h-3zM-33.7 24.0h4v3h-4zM-18.0 27.0h3v2.4h-3zM-21.1 50.4h2v2.4h-2zM-66.4 26.8h3v3h-3zM-34.6 66.9h4v3h-4zM-58.2 14.4h4v2.4h-4zM-41.5 20.6h3v2h-3zM-70.8 33.4h3v3h-3zM-57.5 22.0h2.4v2h-2.4zM-30.5 44.5h2.4v2.4h-2.4zM-66.2 53.1h2v3h-2zM-24.4 15.8h2.4v2.4h-2.4zM-49.0 59.6h4v3h-4zM-67.9 33.7h2v2.4h-2zM-26.8 22.0h2.4v3h-2.4zM-75.7 15.5h4v2h-4zM-72.6 16.5h3v3h-3zM-16.7 57.4h2v2h-2zM-60.2 24.3h2v2.4h-2zM-65.6 48.6h2.4v2h-2.4zM-67.5 42.9h4v2.4h-4zM-68.7 44.7h2v2.4h-2zM-77.7 30.6h2v2h-2zM-28.0 64.5h4v3h-4zM-25.2 29.6h3v3h-3zM-69.8 34.7h3v3h-3zM-71.3 49.3h3v2.4h-3zM-59.6 27.2h2v3h-2zM-32.5 48.7h4v2.4h-4zM-30.5 20.1h2v3h-2zM-42.2 61.5h3v2h-3zM-26.0 49.4h2.4v2.4h-2.4zM-69.8 56.2h2v2.4h-2zM-39.0 29.1h3v3h-3zM-53.9 28.5h2v2.4h-2zM-66.4 41.3h2.4v3h-2.4zM-25.4 24.7h3v3h-3zM-77.9 14.1h2v3h-2zM-57.7 28.9h2v2h-2zM-51.3 63.6h4v2h-4zM-33.2 60.3h4v2.4h-4zM-58.3 35.5h3v3h-3zM-32.0 39.0h2.4v3h-2.4zM-18.1 25.0h2.4v3h-2.4zM-75.8 36.4h2.4v3h-2.4z" fill="#ff00ff"/><rect x="-2.5" y="-93.5" width="4" height="4" fill="#ffe8f0"/><rect x="25.0" y="-48.5" width="3" height="3" fill="#ffe8f0"/><rect x="22.2" y="9.7" width="3.6" height="3.6" fill="#ffe8f0"/><rect x="25.2" y="47.2" width="3.6" height="3.6" fill="#ffe8f0"/><rect x="-2.8" y="91.2" width="4.6" height="4.6" fill="#ffe8f0"/><rect x="87.7" y="41.2" width="3.6" height="3.6" fill="#ffe8f0"/><rect x="-14" y="-29.5" width="1.6" height="1.6" fill="#f0fff0"/><rect x="-70" y="-39" width="1.6" height="1.6" fill="#f0fff0"/><rect x="-36.5" y="-7.5" width="1.6" height="1.6" fill="#f0fff0"/></g><g transform="translate(632.5,327.5)"><circle cx="-85" cy="-85.5" r="9.5" fill="#ff0000"/><circle cx="-92.5" cy="-71" r="9" fill="#ff0000"/><circle cx="-80" cy="-75" r="8" fill="#ff0000"/><circle cx="-71" cy="-70" r="6" fill="#ff0000"/><circle cx="85" cy="-84" r="9.5" fill="#ff0000"/><circle cx="93" cy="-70" r="9" fill="#ff0000"/><circle cx="80" cy="-74" r="8" fill="#ff0000"/><circle cx="71" cy="-70" r="6" fill="#ff0000"/><circle cx="-78" cy="93" r="10" fill="#ff0000"/><circle cx="-66" cy="97.5" r="8.5" fill="#ff0000"/><circle cx="-72" cy="88" r="8" fill="#ff0000"/><circle cx="80" cy="92" r="10" fill="#ff0000"/><circle cx="68" cy="96.5" r="8.5" fill="#ff0000"/><circle cx="74" cy="87" r="8" fill="#ff0000"/><circle cx="88" cy="86" r="6" fill="#ff0000"/><circle cx="0" cy="0" r="106.2" fill="#000" stroke="#ff0000" stroke-width="6"/><circle cx="0" cy="0" r="104.6" fill="none" stroke="#ff0000" stroke-width="0.9"/><g clip-path="url(#dc)"><circle cx="-108" cy="0.5" r="13.5" fill="#000" stroke="#ff0000" stroke-width="2.2"/><circle cx="101" cy="1" r="15.5" fill="#000" stroke="#ff0000" stroke-width="2.2"/><circle cx="52.5" cy="-88.5" r="9.5" fill="#000" stroke="#ff0000" stroke-width="2"/><circle cx="51.5" cy="91" r="9.5" fill="#000" stroke="#ff0000" stroke-width="2"/></g><path d="M-59.1 -89.2 A107 107 0 0 1 -51.1 -94.0" stroke="#ffffff" stroke-width="1.8" fill="none"/><path d="M30.4 -102.6 A107 107 0 0 1 39.2 -99.6" stroke="#ffffff" stroke-width="1.8" fill="none"/><path d="M-98.5 -41.8 A107 107 0 0 1 -94.9 -49.4" stroke="#ffffff" stroke-width="1.8" fill="none"/><path d="M103.4 -27.7 A107 107 0 0 1 105.2 -19.5" stroke="#ffffff" stroke-width="1.8" fill="none"/><path d="M-103.8 25.9 A107 107 0 0 1 -105.5 17.7" stroke="#ffffff" stroke-width="1.8" fill="none"/><path d="M-47.7 95.8 A107 107 0 0 1 -55.9 91.2" stroke="#ffffff" stroke-width="1.8" fill="none"/><path d="M22.2 104.7 A107 107 0 0 1 13.0 106.2" stroke="#ffffff" stroke-width="1.8" fill="none"/><path d="M98.5 41.8 A107 107 0 0 1 94.9 49.4" stroke="#ffffff" stroke-width="1.8" fill="none"/><circle cx="0" cy="0.5" r="19" fill="#000" stroke="#ff0000" stroke-width="5.4"/><rect x="-18.0" y="-17.5" width="36.0" height="35.0" fill="#ff0000" transform="translate(70.3,-50.9) rotate(-34)"/><rect x="-15.0" y="-15.0" width="30.0" height="30.0" fill="#ff0000" transform="translate(42.0,-0.2) rotate(-21)"/><rect x="-8.2" y="-8.2" width="16.5" height="16.5" fill="#ff0000" transform="translate(-1.0,-38.5) rotate(29)"/><rect x="-4.5" y="-3.0" width="9.0" height="6.0" fill="#ff0000" transform="translate(-46.0,-45.0) rotate(-40)"/><rect x="-2.5" y="-3.5" width="5.0" height="7.0" fill="#ff0000" transform="translate(-75.6,-12.6) rotate(0)"/><rect x="-2.5" y="-1.5" width="5.0" height="3.0" fill="#ff0000" transform="translate(-27.5,-55.0) rotate(0)"/><circle cx="33.5" cy="-59" r="6.8" fill="#ff0000"/><circle cx="33.5" cy="-59" r="2.2" fill="#000"/><circle cx="-69.5" cy="0.5" r="6.8" fill="#ff0000"/><circle cx="-69.5" cy="0.5" r="2.2" fill="#000"/><circle cx="34" cy="60" r="6.8" fill="#ff0000"/><circle cx="34" cy="60" r="2.2" fill="#000"/><path d="M57.5 40.5 H80 V58 L84 65 L78 68 L70.7 56 V49 H57.5 Z" fill="#ff0000"/><rect x="-54" y="34.5" width="7.5" height="7.5" fill="#ff0000"/><rect x="-45" y="34.5" width="7.5" height="7.5" fill="#ff0000"/><rect x="-54" y="44" width="7.5" height="7.5" fill="#ff0000"/><rect x="-45" y="44" width="7.5" height="7.5" fill="#ff0000"/><path d="M-60.0 24h2.4v4h-2.4z M-60.0 56h2.4v4h-2.4zM-66 28.0h4v2h-4z M-24 28.0h4v2.2h-4zM-55.6 24h2.4v4h-2.4z M-55.6 56h2.4v4h-2.4zM-66 31.6h4v2h-4z M-24 31.6h4v2.2h-4zM-51.2 24h2.4v4h-2.4z M-51.2 56h2.4v4h-2.4zM-66 35.2h4v2h-4z M-24 35.2h4v2.2h-4zM-46.8 24h2.4v4h-2.4z M-46.8 56h2.4v4h-2.4zM-66 38.8h4v2h-4z M-24 38.8h4v2.2h-4zM-42.4 24h2.4v4h-2.4z M-42.4 56h2.4v4h-2.4zM-66 42.4h4v2h-4z M-24 42.4h4v2.2h-4zM-38.0 24h2.4v4h-2.4z M-38.0 56h2.4v4h-2.4zM-66 46.0h4v2h-4z M-24 46.0h4v2.2h-4zM-33.6 24h2.4v4h-2.4z M-33.6 56h2.4v4h-2.4zM-66 49.6h4v2h-4z M-24 49.6h4v2.2h-4zM-29.2 24h2.4v4h-2.4z M-29.2 56h2.4v4h-2.4zM-66 53.2h4v2h-4z M-24 53.2h4v2.2h-4zM-24.8 24h2.4v4h-2.4z M-24.8 56h2.4v4h-2.4zM-66 56.8h4v2h-4z M-24 56.8h4v2.2h-4z" fill="#ff0000"/><path d="M-30 20 h2.4 v32 h-2.4z M-8 50 h2.6 v20 h-2.6z M-37 79 h20 v2.2 h-20z M20 33 l8 -8 l2 2 l-8 8z" fill="#ff0000"/><path d="M-52 -89 L-38 -72 L-30 -66 L-32 -50 L-46 -40 L-56 -30 L-72 -44 L-82 -52 M45 -92 L44 -70 L34 -58 L14 -44 L8 -36 M4 -30 L18 -22 L28 -50 M38 -42 L52 -34 L60 -38 M48 70 L52 62 L66 57 L74 60 L80 68 L78 76 L66 82 L54 84 L48 80 Z" fill="none" stroke="#ff0000" stroke-width="0.8"/><path d="M-70.8 21.8h2.4v2.4h-2.4zM-36.3 -22.2h3v2.4h-3zM-9.8 28.1h3.4v2h-3.4zM-5.6 -79.6h3v2h-3zM9.9 -55.7h3v2h-3zM-44.5 -54.0h3.4v2h-3.4zM-17.4 97.3h2v2.4h-2zM6.8 52.8h2v3h-2zM-73.8 53.4h2.4v2h-2.4zM23.7 91.4h2.4v2.4h-2.4zM-21.4 16.1h3.4v2h-3.4zM-3.6 29.0h2.4v2h-2.4zM0.7 31.5h2v2.4h-2zM-40.9 14.0h3.4v2h-3.4zM-82.6 -54.4h2v2h-2zM76.8 -2.0h7v1.8h-7zM-4.5 86.9h2.4v2.4h-2.4zM-53.0 57.4h2v3h-2zM-82.2 -41.6h2v2h-2zM10.5 76.6h3.4v2h-3.4zM-23.8 -56.9h5v1.8h-5zM94.3 23.4h2v2.4h-2zM-11.2 39.9h9v1.8h-9zM-17.9 93.1h5v1.8h-5zM40.4 43.8h2.4v2.4h-2.4zM-27.3 -70.6h7v1.8h-7zM-29.5 -92.6h2v3h-2zM-84.1 9.4h2.4v2h-2.4zM65.1 33.3h3.4v2h-3.4zM-6.7 -82.8h5v1.8h-5zM23.2 -89.0h3v2.4h-3zM-2.9 63.8h2.4v2.4h-2.4zM-23.0 -62.9h1.8v5h-1.8zM-10.8 27.2h2v2h-2zM-36.9 -58.3h2v2.4h-2zM-19.4 -40.1h2v2.4h-2zM-87.3 33.4h2.4v2.4h-2.4zM20.7 61.6h2v2h-2zM-48.3 -27.8h2v2h-2zM47.5 -77.9h5v1.8h-5zM-80.5 -10.2h3.4v3h-3.4zM-19.2 -72.3h7v1.8h-7zM32.0 80.7h2.4v2h-2.4zM-38.3 -46.3h2v2h-2zM-41.3 6.5h2v2.4h-2zM13.0 -71.6h3v3h-3zM2.4 -62.1h1.8v9h-1.8zM30.6 88.1h2v2.4h-2zM-40.3 -57.5h2.4v2.4h-2.4zM3.0 61.8h2v2.4h-2zM14.2 -54.2h3.4v2h-3.4zM57.0 32.7h3v2.4h-3zM-44.7 75.6h1.8v9h-1.8zM-81.0 -9.3h2.4v2.4h-2.4zM-32.2 -79.9h2.4v3h-2.4zM41.9 -27.6h3v2h-3zM46.2 56.6h2.4v3h-2.4zM-28.4 17.7h2v3h-2zM-40.5 27.8h2.4v2h-2.4zM49.8 40.4h1.8v5h-1.8zM-79.4 -45.1h3v2.4h-3zM-27.9 -88.5h2v2.4h-2zM35.3 -69.2h3.4v3h-3.4zM-89.8 -16.9h3v3h-3zM9.3 84.7h2.4v2h-2.4zM-37.8 87.3h2v2h-2zM-77.5 41.6h2v2h-2zM24.8 77.9h2.4v2h-2.4zM-38.5 -43.4h3.4v2h-3.4zM5.8 -77.3h5v1.8h-5zM-16.8 79.5h1.8v5h-1.8zM5.2 -56.4h2.4v2.4h-2.4zM-69.5 32.6h2v2h-2zM-4.2 -62.9h2v3h-2zM-25.8 -88.1h3.4v2.4h-3.4zM27.4 70.5h2.4v2.4h-2.4zM38.1 42.2h3v2.4h-3zM6.0 -62.8h7v1.8h-7zM93.9 -5.6h2v2h-2zM13.4 61.7h1.8v7h-1.8zM7.2 -97.7h2v2h-2zM20.4 57.1h2v2.4h-2zM-97.2 -4.8h3v2h-3zM10.0 -25.4h3v2h-3zM57.0 -23.1h2.4v3h-2.4zM89.8 34.6h2.4v2.4h-2.4zM-48.9 -34.5h2.4v2.4h-2.4zM-48.9 -19.6h1.8v9h-1.8zM1.8 -61.8h1.8v7h-1.8zM-61.8 29.3h2v2h-2zM-96.0 19.3h2v3h-2zM60.8 19.9h2v2h-2zM-24.2 30.5h9v1.8h-9zM-5.8 75.3h2.4v2.4h-2.4zM-97.0 -19.0h2.4v2h-2.4zM16.7 -76.5h2.4v2.4h-2.4zM-29.5 -68.3h3v2h-3zM0.6 98.0h2v2h-2zM9.0 51.5h2v2h-2zM-41.1 -44.4h2.4v2.4h-2.4zM-47.4 71.1h2v2h-2zM39.6 -81.5h2.4v2.4h-2.4zM-29.6 24.5h2v3h-2zM-81.6 -25.7h2v2.4h-2zM-58.8 -32.6h2.4v2h-2.4zM-67.9 30.9h3.4v2.4h-3.4zM18.4 78.4h2v2.4h-2zM5.0 -56.5h2v2h-2zM-9.0 -59.2h2v2.4h-2zM-86.0 -40.0h3.4v2.4h-3.4zM17.9 -51.6h2.4v2h-2.4zM0.6 59.5h2.4v2h-2.4zM25.2 69.9h2.4v3h-2.4zM-35.0 -22.6h2v2.4h-2zM-88.7 -40.0h1.8v9h-1.8zM-7.6 -93.6h2v2h-2zM-29.1 -39.5h2v2.4h-2zM-85.8 -11.7h2.4v2.4h-2.4zM79.6 -16.1h2.4v2.4h-2.4zM-15.1 -81.9h2v2.4h-2zM57.1 35.9h3v2h-3zM-22.0 -85.9h2.4v2.4h-2.4zM1.1 39.9h3.4v2.4h-3.4zM-26.6 55.7h3v2.4h-3zM-6.6 -54.1h2v2h-2zM-87.9 10.5h2.4v2h-2.4zM-48.2 58.7h3v2.4h-3zM6.9 42.0h2.4v2.4h-2.4zM2.6 -55.2h3v3h-3zM-6.1 93.1h2.4v3h-2.4zM-37.2 27.3h2v2.4h-2zM24.1 -83.7h2v2h-2zM-46.8 15.2h2.4v3h-2.4zM-75.1 43.9h2v2.4h-2zM13.2 -33.3h3.4v3h-3.4zM-37.5 -8.3h2v2h-2zM40.6 42.4h7v1.8h-7zM-67.8 -19.0h2v2h-2zM20.9 -40.1h3v2.4h-3zM48.6 25.2h2.4v2h-2.4zM-12.4 -29.7h2.4v2.4h-2.4zM-86.6 31.0h3.4v2.4h-3.4zM-61.6 -26.3h2v2h-2zM45.3 64.1h3v2.4h-3zM2.3 -73.8h2v2.4h-2zM-23.4 22.9h2.4v2.4h-2.4zM-9.3 -56.2h1.8v5h-1.8zM-36.6 -74.9h2v2h-2zM39.8 25.3h2v2h-2zM7.7 -57.4h5v1.8h-5zM-31.1 55.4h2v2.4h-2zM-36.3 80.1h2v3h-2zM-2.9 42.9h9v1.8h-9zM-26.6 46.5h2v3h-2zM-1.8 72.6h2.4v3h-2.4zM-54.1 -45.9h3v2h-3zM-83.3 -8.4h2v3h-2zM-30.7 -31.6h2v2h-2zM-73.3 -38.2h2.4v2h-2.4zM-71.4 -20.0h3v2.4h-3zM-2.5 -93.7h1.8v5h-1.8zM-22.5 91.0h2v3h-2zM-71.9 50.0h3.4v2h-3.4zM-40.4 -74.8h2.4v3h-2.4zM21.1 64.4h2v3h-2zM-37.4 -17.5h3v2h-3zM-51.9 -23.7h3.4v2h-3.4zM14.7 -61.1h9v1.8h-9zM-43.8 29.0h2.4v2.4h-2.4zM52.8 -21.3h2.4v2h-2.4zM79.4 28.4h2.4v2.4h-2.4zM0.6 -54.6h3v2h-3zM27.2 -40.4h2v2.4h-2zM-47.8 -7.9h2.4v2.4h-2.4zM-11.1 -91.7h2.4v3h-2.4zM15.9 -43.8h3.4v2.4h-3.4zM25.5 -17.7h2v2h-2zM-59.2 -30.6h2.4v2h-2.4zM-61.9 24.1h1.8v5h-1.8zM-44.3 7.7h2.4v2h-2.4zM-40.4 7.1h3.4v3h-3.4zM-29.2 -32.0h2v2h-2zM-81.4 44.5h2.4v2.4h-2.4zM-10.0 83.4h3v2.4h-3zM-56.1 57.8h2v3h-2zM92.7 -13.4h2v2h-2zM-18.9 -22.9h2v2.4h-2zM75.7 3.3h3v2.4h-3zM-36.5 -16.8h2v2h-2zM93.5 1.6h1.8v7h-1.8zM-29.6 62.1h2v3h-2zM36.7 -69.8h3.4v3h-3.4zM-37.4 -30.2h2.4v3h-2.4zM-46.5 3.2h3v3h-3zM74.6 16.8h3.4v2h-3.4zM69.3 7.8h2.4v3h-2.4zM-7.2 88.2h2v2h-2zM-66.2 -30.6h3.4v2h-3.4zM60.9 21.5h3.4v2.4h-3.4zM-6.3 -87.2h1.8v5h-1.8zM-80.4 1.6h7v1.8h-7zM-26.3 -78.8h2v2h-2zM7.0 -98.1h2v2.4h-2zM-60.6 38.5h2v2.4h-2zM-94.3 16.8h2v3h-2zM-1.5 73.5h2v2.4h-2zM76.8 -9.1h2v2h-2zM-45.6 68.8h3v2h-3zM-71.1 56.6h2.4v2.4h-2.4zM12.6 57.0h2v3h-2zM-62.1 7.8h3v2.4h-3zM-68.3 11.9h3.4v2h-3.4zM17.2 58.8h2v2h-2zM-4.8 61.9h3.4v2h-3.4zM-24.9 29.7h2.4v2h-2.4zM-15.7 -93.0h2v2.4h-2zM-87.0 28.3h2.4v2.4h-2.4zM-24.9 73.1h2.4v2h-2.4zM-35.2 -3.1h2v2.4h-2zM-81.7 11.0h3v3h-3zM-12.4 -79.8h2v2h-2zM-64.8 -14.5h2v2.4h-2zM-19.5 25.0h2.4v2.4h-2.4zM-1.3 -68.8h2v2.4h-2zM-55.0 -21.0h2v2.4h-2zM-20.0 -22.0h2.4v2h-2.4zM57.0 22.6h2.4v2.4h-2.4zM-7.3 38.7h2.4v2h-2.4zM40.3 69.9h7v1.8h-7zM33.1 -43.9h2.4v2h-2.4zM58.1 24.3h2v2.4h-2zM-58.2 -34.8h7v1.8h-7zM-6.0 80.7h2v2.4h-2zM-51.0 78.7h2v3h-2zM5.7 26.6h2v3h-2zM61.3 28.1h2.4v2.4h-2.4zM-66.6 58.7h3.4v3h-3.4zM76.4 10.2h2.4v2h-2.4zM13.4 70.2h1.8v9h-1.8zM41.5 -83.3h2.4v2.4h-2.4zM41.9 -36.3h3.4v2.4h-3.4zM-50.1 -48.0h3v2.4h-3zM-19.1 83.5h3v2.4h-3zM0.2 56.4h2v3h-2zM-45.9 -44.0h2.4v2h-2.4zM-68.0 51.2h3.4v2.4h-3.4zM-39.8 -45.0h3.4v2.4h-3.4zM27.7 -35.2h2v3h-2zM-22.1 -27.2h3.4v2.4h-3.4zM42.9 43.0h3.4v2.4h-3.4zM-82.5 -49.2h2v2.4h-2zM-68.8 38.2h2.4v2.4h-2.4zM-11.6 -98.0h2v2.4h-2zM71.9 12.1h2.4v2h-2.4zM-32.2 82.5h3.4v2.4h-3.4zM-11.1 -62.3h2v3h-2zM-25.2 -68.7h2v2.4h-2zM-0.6 69.2h2v2h-2zM73.9 9.0h2v2.4h-2zM-7.1 46.7h2.4v2h-2.4zM86.0 36.8h5v1.8h-5zM-76.4 45.5h1.8v9h-1.8zM-12.5 47.8h2.4v3h-2.4zM-54.3 66.6h2.4v2h-2.4zM-87.8 -15.2h3.4v2.4h-3.4zM29.5 -85.1h2v2.4h-2zM-13.7 -47.6h7v1.8h-7zM-49.2 -74.3h2.4v2.4h-2.4zM-17.2 92.6h9v1.8h-9zM37.2 40.0h2v2h-2zM-63.8 -40.0h2.4v2.4h-2.4zM17.7 -91.6h2.4v2h-2.4zM24.0 54.1h2v2h-2zM-49.4 -80.6h2v2h-2zM-36.7 54.4h3.4v2.4h-3.4zM-30.5 -13.8h3.4v2.4h-3.4zM-88.6 18.5h3v2h-3zM-50.4 15.8h9v1.8h-9zM-96.7 19.3h3.4v3h-3.4zM-8.2 -98.1h2.4v2h-2.4zM-47.8 2.7h3.4v2h-3.4zM20.9 -67.7h2v2h-2zM-11.8 -48.1h2.4v2.4h-2.4zM64.4 5.8h2.4v2.4h-2.4zM2.3 32.3h2.4v2.4h-2.4zM62.7 30.6h2v3h-2zM88.0 38.6h7v1.8h-7zM-15.3 62.0h1.8v7h-1.8zM21.6 -15.4h3.4v2h-3.4zM-39.2 88.5h2v3h-2zM-29.7 47.0h3.4v2.4h-3.4zM11.7 43.8h2v2h-2zM-34.8 7.4h2v2.4h-2zM-45.6 -37.7h2v2h-2zM-30.4 -79.3h2.4v2.4h-2.4zM8.1 25.2h2.4v2.4h-2.4zM-39.7 -34.0h9v1.8h-9zM-13.8 -46.0h3v2h-3zM36.9 -38.0h3.4v2.4h-3.4zM-43.7 6.2h2.4v3h-2.4zM-38.3 -46.1h2.4v2.4h-2.4zM-27.9 -43.0h3.4v2h-3.4zM2.1 63.5h2v3h-2zM-0.7 64.2h2.4v2h-2.4zM-29.9 -8.9h2v2h-2zM-69.7 -44.4h2v2h-2zM-32.7 74.2h3v2h-3zM97.6 -14.5h2.4v2.4h-2.4zM-61.0 14.7h3.4v2h-3.4zM-60.3 -35.3h2v3h-2zM39.8 69.1h3v2.4h-3zM66.9 -12.8h2v2.4h-2zM91.3 9.1h2v2h-2zM-70.5 -16.2h2v2h-2zM-34.9 -1.6h9v1.8h-9zM-21.1 54.9h2v2h-2zM-96.3 20.7h3v2.4h-3zM-37.6 -0.9h3v3h-3zM-71.7 -65.6h3.4v2h-3.4zM35.4 -77.1h2v2.4h-2zM-30.5 92.4h3.4v2h-3.4zM-14.0 43.7h3v2h-3zM-81.9 45.5h2v3h-2zM-63.8 -29.0h2v2.4h-2zM-8.4 76.2h1.8v7h-1.8zM-72.1 -12.8h2.4v2h-2.4zM-61.4 74.5h3v3h-3zM-80.8 -53.7h2.4v3h-2.4zM24.3 -38.3h2v2.4h-2zM-51.3 75.9h2v2.4h-2zM34.1 -89.9h1.8v5h-1.8zM37.1 -79.7h1.8v9h-1.8zM37.2 44.1h3.4v2h-3.4zM-18.6 -41.5h3v2h-3zM-56.8 7.5h3.4v2h-3.4zM-39.1 -79.5h2.4v2.4h-2.4zM-12.6 -89.6h2.4v3h-2.4zM-18.2 -59.7h1.8v5h-1.8zM-62.4 37.0h2v2h-2zM-55.4 25.2h3.4v2.4h-3.4zM-22.9 -57.3h2.4v2h-2.4zM-57.1 -35.6h3v2h-3zM-15.5 -45.3h2.4v2.4h-2.4zM-44.7 -22.8h2v2.4h-2zM-13.6 -63.7h3v2h-3zM93.3 -14.3h2.4v2.4h-2.4zM10.1 85.3h2v2.4h-2zM-23.6 31.7h2.4v2.4h-2.4zM-92.1 32.1h1.8v5h-1.8zM91.5 -8.0h3.4v3h-3.4zM27.0 -72.3h2.4v2h-2.4zM72.0 9.2h2.4v2.4h-2.4zM-47.1 -18.9h1.8v9h-1.8zM0.2 -83.0h3v2.4h-3zM-78.4 38.7h3.4v3h-3.4zM-57.6 17.6h3.4v2h-3.4zM-27.7 38.8h3v2h-3zM20.2 56.5h1.8v5h-1.8zM40.3 49.2h2v3h-2zM-75.2 31.6h2v3h-2zM-72.4 -61.9h3.4v2h-3.4zM-27.7 2.5h2.4v2h-2.4zM73.1 -12.7h2v2.4h-2zM9.9 50.7h2v3h-2zM-30.5 -71.3h3v2.4h-3zM88.4 18.0h3.4v3h-3.4zM-75.5 -41.5h2v2h-2zM-37.8 29.1h2.4v2.4h-2.4zM-73.0 58.9h9v1.8h-9zM-41.6 69.9h2.4v2h-2.4zM-38.1 22.8h2v2.4h-2zM17.2 93.3h2v2h-2zM-58.8 -48.8h3v2.4h-3zM64.7 28.4h3.4v2h-3.4zM18.2 -70.4h2v3h-2zM12.8 62.4h2v2.4h-2zM-22.9 -41.9h2v2.4h-2zM-88.9 -36.7h2v2.4h-2zM94.6 19.9h7v1.8h-7zM-21.3 -93.9h1.8v9h-1.8zM-56.7 62.5h2.4v2h-2.4zM-14.8 39.7h2v2.4h-2zM-72.2 -18.7h3v2.4h-3zM48.8 25.5h3.4v3h-3.4zM77.2 -17.2h2v2.4h-2zM-58.3 79.9h7v1.8h-7zM5.0 -62.5h2v2.4h-2zM39.5 75.2h7v1.8h-7zM-47.2 78.0h3v2.4h-3zM-0.4 85.3h1.8v9h-1.8zM-63.1 36.3h2.4v2.4h-2.4zM41.0 -24.7h3.4v2h-3.4zM-87.9 -35.7h2v2.4h-2zM-34.0 -19.7h2.4v2.4h-2.4zM-32.9 4.3h3.4v3h-3.4zM-31.7 -74.1h2.4v2.4h-2.4zM-54.1 -31.2h2v2.4h-2zM-21.2 -23.5h7v1.8h-7zM32.3 45.3h3.4v3h-3.4zM-24.5 -61.4h2.4v2h-2.4zM24.5 -79.8h2v2h-2zM-16.1 46.2h2v3h-2zM-78.1 14.4h3.4v2.4h-3.4zM-16.3 -28.4h2.4v2.4h-2.4zM32.3 75.9h2.4v3h-2.4zM-0.5 -81.0h2.4v2.4h-2.4zM20.4 -90.3h2.4v2.4h-2.4zM-25.0 -23.0h2v3h-2zM-80.5 17.1h2v2.4h-2zM53.2 -20.2h2v2.4h-2zM-47.6 -26.5h2.4v2h-2.4zM-13.1 70.4h1.8v9h-1.8zM81.9 26.7h3v2h-3zM-45.1 -9.0h2v2.4h-2zM57.0 30.9h2.4v2.4h-2.4zM-74.6 -26.9h3v2.4h-3zM77.4 -6.3h2v3h-2zM17.5 -73.6h2.4v2.4h-2.4zM-62.7 17.5h2v2.4h-2zM-1.6 94.1h9v1.8h-9zM-32.7 13.5h2.4v2.4h-2.4zM-2.3 -62.8h3.4v2h-3.4zM64.1 23.0h7v1.8h-7zM-33.1 -30.7h2v2.4h-2zM-37.1 -43.7h2v2h-2zM-13.6 -74.0h3.4v2.4h-3.4zM42.8 28.1h2v2.4h-2zM18.3 62.7h1.8v9h-1.8zM9.5 -66.1h2.4v3h-2.4zM-66.8 65.9h2.4v2h-2.4zM-24.1 80.7h3v2.4h-3zM-26.8 -38.7h2v3h-2zM-10.7 -73.5h2.4v2h-2.4zM51.4 32.8h2.4v2.4h-2.4zM31.1 89.3h2v2.4h-2zM-70.4 -44.9h2.4v2.4h-2.4zM-0.8 83.1h3v2.4h-3zM10.8 -55.4h3.4v3h-3.4zM-11.4 73.7h3v2.4h-3zM-13.9 -27.7h2v2.4h-2zM-61.4 -23.1h2v2.4h-2zM-25.6 78.3h3.4v2.4h-3.4zM-21.0 -31.9h2.4v3h-2.4zM-82.4 5.6h2v2.4h-2zM20.0 80.6h3.4v2.4h-3.4zM-25.6 60.6h3v2.4h-3zM13.3 76.8h2v2.4h-2zM-72.3 -47.6h2.4v2.4h-2.4zM-50.3 70.9h2.4v2h-2.4zM64.8 25.2h3.4v2h-3.4zM-2.5 -86.6h3.4v3h-3.4zM-71.9 -47.9h2.4v3h-2.4zM-66.7 57.7h2.4v2h-2.4zM-55.4 -48.6h2v2h-2zM-29.7 60.8h2.4v2h-2.4zM0.4 53.5h9v1.8h-9zM-19.0 -38.7h3v3h-3zM-78.8 28.8h2v2.4h-2zM-70.5 25.9h5v1.8h-5zM-68.8 19.4h2.4v3h-2.4zM-35.1 54.2h4v2h-4zM-23.4 67.5h2.4v2h-2.4zM-71.2 42.9h3v3h-3zM-75.6 29.6h3v2h-3zM-45.0 20.1h2.4v2.4h-2.4zM-33.7 54.5h4v3h-4zM-16.6 62.4h2v3h-2zM-34.0 17.7h2.4v3h-2.4zM-47.0 64.5h3v3h-3zM-20.9 47.2h2v2h-2zM-33.3 63.9h2v2h-2zM-30.8 32.0h2v3h-2zM-66.6 24.2h2.4v2h-2.4zM-74.5 15.8h2.4v2h-2.4zM-23.0 48.8h3v2.4h-3zM-22.1 54.1h3v3h-3zM-70.9 14.4h2v3h-2zM-59.1 61.5h3v2.4h-3zM-33.7 24.0h4v3h-4zM-18.0 27.0h3v2.4h-3zM-21.1 50.4h2v2.4h-2zM-66.4 26.8h3v3h-3zM-34.6 66.9h4v3h-4zM-58.2 14.4h4v2.4h-4zM-41.5 20.6h3v2h-3zM-70.8 33.4h3v3h-3zM-57.5 22.0h2.4v2h-2.4zM-30.5 44.5h2.4v2.4h-2.4zM-66.2 53.1h2v3h-2zM-24.4 15.8h2.4v2.4h-2.4zM-49.0 59.6h4v3h-4zM-67.9 33.7h2v2.4h-2zM-26.8 22.0h2.4v3h-2.4zM-75.7 15.5h4v2h-4zM-72.6 16.5h3v3h-3zM-16.7 57.4h2v2h-2zM-60.2 24.3h2v2.4h-2zM-65.6 48.6h2.4v2h-2.4zM-67.5 42.9h4v2.4h-4zM-68.7 44.7h2v2.4h-2zM-77.7 30.6h2v2h-2zM-28.0 64.5h4v3h-4zM-25.2 29.6h3v3h-3zM-69.8 34.7h3v3h-3zM-71.3 49.3h3v2.4h-3zM-59.6 27.2h2v3h-2zM-32.5 48.7h4v2.4h-4zM-30.5 20.1h2v3h-2zM-42.2 61.5h3v2h-3zM-26.0 49.4h2.4v2.4h-2.4zM-69.8 56.2h2v2.4h-2zM-39.0 29.1h3v3h-3zM-53.9 28.5h2v2.4h-2zM-66.4 41.3h2.4v3h-2.4zM-25.4 24.7h3v3h-3zM-77.9 14.1h2v3h-2zM-57.7 28.9h2v2h-2zM-51.3 63.6h4v2h-4zM-33.2 60.3h4v2.4h-4zM-58.3 35.5h3v3h-3zM-32.0 39.0h2.4v3h-2.4zM-18.1 25.0h2.4v3h-2.4zM-75.8 36.4h2.4v3h-2.4z" fill="#ff0000"/><rect x="-2.5" y="-93.5" width="4" height="4" fill="#ffff00"/><rect x="25.0" y="-48.5" width="3" height="3" fill="#ffff00"/><rect x="22.2" y="9.7" width="3.6" height="3.6" fill="#ffff00"/><rect x="25.2" y="47.2" width="3.6" height="3.6" fill="#ffff00"/><rect x="-2.8" y="91.2" width="4.6" height="4.6" fill="#ffff00"/><rect x="87.7" y="41.2" width="3.6" height="3.6" fill="#ffff00"/><rect x="-14" y="-29.5" width="1.6" height="1.6" fill="#f0fff0"/><rect x="-70" y="-39" width="1.6" height="1.6" fill="#f0fff0"/><rect x="-36.5" y="-7.5" width="1.6" height="1.6" fill="#f0fff0"/></g><path d="M384 212.5 H430 Q424 214 420 221 L394 221 Q390 214 384 212.5 Z M384 443 H430 Q424 441 420 434 L394 434 Q390 441 384 443 Z" fill="#ff0000"/><path d="M609 212.5 H656 Q650 214 646 221 L619 221 Q615 214 609 212.5 Z M609 443 H656 Q650 441 646 434 L619 434 Q615 441 609 443 Z" fill="#ff0000"/><path d="M291 302 Q293 312 300.5 317 L300.5 339 Q293 344 291 354 Z" fill="#ff0000"/><path d="M515.5 314 L523 318 L523 338 L515.5 342 Z" fill="#ff0000"/><path d="M746.5 302 Q744.5 312 741 317 L741 339 Q744.5 344 746.5 354 Z" fill="#ff0000"/><rect x="291" y="212.6" width="455.5" height="230.2" rx="3.5" fill="none" stroke="#ff0000" stroke-width="1.5"/><circle cx="314.3" cy="234.3" r="2.2" fill="#ff60ff"/><circle cx="314.3" cy="234.3" r="1" fill="#fff"/><circle cx="304.7" cy="435" r="2.2" fill="#ff60ff"/><circle cx="304.7" cy="435" r="1" fill="#fff"/><circle cx="533" cy="232.7" r="2.2" fill="#ff60ff"/><circle cx="533" cy="232.7" r="1" fill="#fff"/><circle cx="709.6" cy="436.5" r="2.2" fill="#ff60ff"/><circle cx="709.6" cy="436.5" r="1" fill="#fff"/><circle cx="291.5" cy="444.5" r="7" fill="none" stroke="#fff" stroke-width="1"/><path d="M300.5 444.5 L282.5 444.5 M297.9 450.9 L285.1 438.1 M291.5 453.5 L291.5 435.5 M285.1 450.9 L297.9 438.1 " stroke="#fff" stroke-width="1"/><path d="M291.5 436 L291.5 442" stroke="#40e0ff" stroke-width="1"/></svg>
<!-- s_pop -->
<svg style="left:860px;top:30px;" width="400" height="175" viewBox="860 30 400 175"><rect x="1080.5" y="38.5" width="31" height="24" fill="#000" stroke="#fff" stroke-width="1"/><path d="M1080.5 38.5 L869 198.5 M1080.5 62.5 L1016.5 198.5 M1111.5 62.5 L1153.5 198.5 M1111.5 38.5 L1251.5 198.5" stroke="#fff" stroke-width="1" fill="none"/><rect x="1093" y="52" width="1" height="1" fill="#c00"/></svg>
<div style="left:813px;top:199px;width:517px;height:449px;background:#1d1f20;border:1px solid #a4a6a8;border-radius:6px;"></div>
<div style="left:814px;top:200px;width:515px;height:26px;background:linear-gradient(100deg,#2c2c2c 0,#343434 6%,#1a1a1a 28%,#0c0c0c 52%,#0a0a0a 60%,#262626 66%,#111 74%,#161616 90%,#222 100%);border-radius:5px 5px 0 0;"></div>
<div style="left:816px;top:201px;width:112px;height:24px;background:radial-gradient(ellipse at center,rgba(200,200,200,.55) 0,rgba(170,170,170,.38) 45%,rgba(120,120,120,0) 75%);"></div>
<svg style="left:820px;top:205px;" width="16" height="16"><rect x="0.5" y="1.5" width="15" height="13.5" fill="#fcfcf4" stroke="#e8e8e8" stroke-width="1"/><rect x="1" y="2" width="14" height="2.2" fill="#181870"/><path d="M4.5 6.5 L12 13 M12 6.5 L4.5 13" stroke="#c0c810" stroke-width="2.4"/></svg>
<span style="left:841.5px;top:206px;font-family:'Liberation Sans',sans-serif;font-size:12.7px;color:#0c0c0c;white-space:pre;line-height:1;letter-spacing:0.1px">Popview - 1</span>
<div style="left:1277px;top:199px;width:48px;height:19px;background:linear-gradient(180deg,#3c3c3c,#242424);border:1px solid #a8a8a8;border-top:none;border-radius:0 0 5px 5px;"></div>
<div style="left:1278px;top:199px;width:46px;height:18px;background:transparent;border:1px solid #202020;border-top:none;border-radius:0 0 4px 4px;"></div>
<svg style="left:1295px;top:203px;" width="12" height="11"><path d="M2 1.5 L10 9.5 M10 1.5 L2 9.5" stroke="#fff" stroke-width="2.6"/></svg>
<div style="left:818px;top:226px;width:507px;height:417px;background:#000;border:1px solid #a8aaac;"></div>
<div style="left:820px;top:227px;width:502px;height:414px;background:#5ccbb0;"></div>
<div style="left:820px;top:227px;width:467px;height:386px;background:#000;"></div>
<div style="left:820px;top:228px;width:466px;height:384px;background:#000;border-style:solid;border-width:3px;border-color:#2f806c #b4f0e2 #b4f0e2 #2f806c;"></div>
<div style="left:1286px;top:227px;width:36px;height:386px;background:#000;"></div>
<div style="left:1287px;top:474px;width:35px;height:138px;background:#5ccbb0;"></div>
<svg style="left:1288px;top:230px;" width="33" height="33"><rect x="0" y="0" width="33" height="33" fill="#5ccbb0"/><path d="M0 33 L0 0 L33 0 L30 3 L3 3 L3 30 Z" fill="#b4f0e2"/><path d="M33 0 L33 33 L0 33 L3 30 L30 30 L30 3 Z" fill="#3c8f7c"/><rect x="3" y="3" width="27" height="27" fill="#9cdcdc"/><path d="M3 30 L3 3 L30 3 L28.5 4.5 L4.5 4.5 L4.5 28.5 Z" fill="#d4f6f6"/><path d="M30 3 L30 30 L3 30 L4.5 28.5 L28.5 28.5 L28.5 4.5 Z" fill="#5a9c98"/><rect x="6.5" y="6.5" width="20" height="20" fill="#9cdcdc" stroke="#000" stroke-width="1.2"/><rect x="9" y="11.5" width="9" height="9.5" fill="none" stroke="#000" stroke-width="2"/><rect x="20" y="8.5" width="4" height="5" fill="none" stroke="#000" stroke-width="1"/><path d="M22 13.5 L22 17 L19 17" fill="none" stroke="#000" stroke-width="1"/><path d="M16 16.2 L11.5 16.2 M13.5 14.2 L11.5 16.2 L13.5 18.2" fill="none" stroke="#000" stroke-width="1"/></svg>
<svg style="left:1288px;top:265px;" width="33" height="33"><rect x="0" y="0" width="33" height="33" fill="#5ccbb0"/><path d="M0 33 L0 0 L33 0 L30 3 L3 3 L3 30 Z" fill="#b4f0e2"/><path d="M33 0 L33 33 L0 33 L3 30 L30 30 L30 3 Z" fill="#3c8f7c"/><rect x="3" y="3" width="27" height="27" fill="#9cdcdc"/><path d="M3 30 L3 3 L30 3 L28.5 4.5 L4.5 4.5 L4.5 28.5 Z" fill="#d4f6f6"/><path d="M30 3 L30 30 L3 30 L4.5 28.5 L28.5 28.5 L28.5 4.5 Z" fill="#5a9c98"/><rect x="6.5" y="6.5" width="20" height="20" fill="#9cdcdc" stroke="#000" stroke-width="1.2"/><path d="M9.5 13 L9.5 23 L23.5 23 L23.5 13" fill="none" stroke="#000" stroke-width="2"/><polygon points="16.5,7.5 21.5,12 19.5,12 19.5,18.5 13.5,18.5 13.5,12 11.5,12" fill="#000"/></svg>
<svg style="left:1288px;top:300px;" width="33" height="33"><rect x="0" y="0" width="33" height="33" fill="#5ccbb0"/><path d="M0 33 L0 0 L33 0 L30 3 L3 3 L3 30 Z" fill="#b4f0e2"/><path d="M33 0 L33 33 L0 33 L3 30 L30 30 L30 3 Z" fill="#3c8f7c"/><rect x="3" y="3" width="27" height="27" fill="#9cdcdc"/><path d="M3 30 L3 3 L30 3 L28.5 4.5 L4.5 4.5 L4.5 28.5 Z" fill="#d4f6f6"/><path d="M30 3 L30 30 L3 30 L4.5 28.5 L28.5 28.5 L28.5 4.5 Z" fill="#5a9c98"/><rect x="6.5" y="6.5" width="20" height="20" fill="#9cdcdc" stroke="#000" stroke-width="1.2"/><rect x="9.5" y="9.5" width="14" height="10" fill="none" stroke="#000" stroke-width="2"/><polygon points="13.5,15 19.5,15 19.5,21 22,21 16.5,26 11,21 13.5,21" fill="#000"/></svg>
<svg style="left:1288px;top:335px;" width="33" height="33"><rect x="0" y="0" width="33" height="33" fill="#5ccbb0"/><path d="M0 33 L0 0 L33 0 L30 3 L3 3 L3 30 Z" fill="#b4f0e2"/><path d="M33 0 L33 33 L0 33 L3 30 L30 30 L30 3 Z" fill="#3c8f7c"/><rect x="3" y="3" width="27" height="27" fill="#9cdcdc"/><path d="M3 30 L3 3 L30 3 L28.5 4.5 L4.5 4.5 L4.5 28.5 Z" fill="#d4f6f6"/><path d="M30 3 L30 30 L3 30 L4.5 28.5 L28.5 28.5 L28.5 4.5 Z" fill="#5a9c98"/><rect x="6.5" y="6.5" width="20" height="20" fill="#9cdcdc" stroke="#000" stroke-width="1.2"/><path d="M14 9.5 L23 9.5 L23 23.5 L14 23.5" fill="none" stroke="#000" stroke-width="2"/><polygon points="7.5,16.5 12,11.5 12,13.5 18,13.5 18,19.5 12,19.5 12,21.5" fill="#000"/></svg>
<svg style="left:1288px;top:370px;" width="33" height="33"><rect x="0" y="0" width="33" height="33" fill="#5ccbb0"/><path d="M0 33 L0 0 L33 0 L30 3 L3 3 L3 30 Z" fill="#b4f0e2"/><path d="M33 0 L33 33 L0 33 L3 30 L30 30 L30 3 Z" fill="#3c8f7c"/><rect x="3" y="3" width="27" height="27" fill="#9cdcdc"/><path d="M3 30 L3 3 L30 3 L28.5 4.5 L4.5 4.5 L4.5 28.5 Z" fill="#d4f6f6"/><path d="M30 3 L30 30 L3 30 L4.5 28.5 L28.5 28.5 L28.5 4.5 Z" fill="#5a9c98"/><rect x="6.5" y="6.5" width="20" height="20" fill="#9cdcdc" stroke="#000" stroke-width="1.2"/><path d="M19 9.5 L10 9.5 L10 23.5 L19 23.5" fill="none" stroke="#000" stroke-width="2"/><polygon points="25.5,16.5 21,11.5 21,13.5 15,13.5 15,19.5 21,19.5 21,21.5" fill="#000"/></svg>
<svg style="left:1288px;top:405px;" width="33" height="33"><rect x="0" y="0" width="33" height="33" fill="#5ccbb0"/><path d="M0 33 L0 0 L33 0 L30 3 L3 3 L3 30 Z" fill="#b4f0e2"/><path d="M33 0 L33 33 L0 33 L3 30 L30 30 L30 3 Z" fill="#3c8f7c"/><rect x="3" y="3" width="27" height="27" fill="#9cdcdc"/><path d="M3 30 L3 3 L30 3 L28.5 4.5 L4.5 4.5 L4.5 28.5 Z" fill="#d4f6f6"/><path d="M30 3 L30 30 L3 30 L4.5 28.5 L28.5 28.5 L28.5 4.5 Z" fill="#5a9c98"/><rect x="6.5" y="6.5" width="20" height="20" fill="#9cdcdc" stroke="#000" stroke-width="1.2"/><rect x="13.5" y="13.5" width="6" height="6" fill="none" stroke="#000" stroke-width="1.6"/><polygon points="12,7 21,7 16.5,11.5" fill="#000"/><polygon points="12,26 21,26 16.5,21.5" fill="#000"/><polygon points="7,12 7,21 11.5,16.5" fill="#000"/><polygon points="26,12 26,21 21.5,16.5" fill="#000"/><path d="M8 8 L11 11 M25 8 L22 11 M8 25 L11 22 M25 25 L22 22" stroke="#000" stroke-width="1"/></svg>
<svg style="left:1288px;top:440px;" width="33" height="33"><rect x="0" y="0" width="33" height="33" fill="#5ccbb0"/><path d="M0 33 L0 0 L33 0 L30 3 L3 3 L3 30 Z" fill="#b4f0e2"/><path d="M33 0 L33 33 L0 33 L3 30 L30 30 L30 3 Z" fill="#3c8f7c"/><rect x="3" y="3" width="27" height="27" fill="#9cdcdc"/><path d="M3 30 L3 3 L30 3 L28.5 4.5 L4.5 4.5 L4.5 28.5 Z" fill="#d4f6f6"/><path d="M30 3 L30 30 L3 30 L4.5 28.5 L28.5 28.5 L28.5 4.5 Z" fill="#5a9c98"/><rect x="6.5" y="6.5" width="20" height="20" fill="#9cdcdc" stroke="#000" stroke-width="1.2"/><rect x="13.5" y="13.5" width="6" height="6" fill="none" stroke="#000" stroke-width="1.4"/><polygon points="16.5,7.5 20.5,11.5 12.5,11.5" fill="#000"/><polygon points="16.5,25.5 20.5,21.5 12.5,21.5" fill="#000"/><polygon points="7.5,16.5 11.5,12.5 11.5,20.5" fill="#000"/><polygon points="25.5,16.5 21.5,12.5 21.5,20.5" fill="#000"/></svg>
<div style="left:822px;top:615px;width:498px;height:23px;background:#9cdcdc;border-style:solid;border-width:2px;border-color:#d4f6f6 #4a8a84 #4a8a84 #d4f6f6;"><span class="m" style="left:0;width:495px;text-align:center;top:3px;font-size:14.5px">Close</span></div>
<svg style="left:1010px;top:441px;" width="17" height="17"><circle cx="8.3" cy="8.6" r="6.4" fill="#ff0000"/></svg>
<!-- s_right -->
<div style="left:1444px;top:18px;width:156px;height:719px;background:#000;"></div>
<div style="left:1444px;top:18px;width:156px;height:3px;background:#3a7f6e;"></div>
<div style="left:1444px;top:18px;width:3px;height:410px;background:#3a7f6e;"></div>
<div style="left:1445px;top:180px;width:155px;height:2.5px;background:#b0f0e4;"></div>
<div style="left:1445px;top:182.5px;width:155px;height:2px;background:#5a6060;"></div>
<div style="left:1444px;top:183px;width:3px;height:242px;background:#6a7070;"></div>
<svg style="left:1447px;top:21px;overflow:hidden;" width="38" height="38" viewBox="0 0 38 38"><rect x="0" y="0" width="38" height="38" fill="#9cdcdc"/><path d="M0 38 L0 0 L38 0 L34 4 L4 4 L4 34 Z" fill="#bfeeee"/><path d="M38 0 L38 38 L0 38 L4 34 L34 34 L34 4 Z" fill="#6aa6a2"/><path d="M0 38 L0 0 L38 0 L36 2 L2 2 L2 36 Z" fill="#e6ffff"/><path d="M38 0 L38 38 L0 38 L2 36 L36 36 L36 2 Z" fill="#4a8a84"/><rect x="4.5" y="4.5" width="29" height="29" fill="#9cdcdc" stroke="#000" stroke-width="1.2"/><rect x="12" y="13" width="15" height="15" fill="none" stroke="#000" stroke-width="2"/><polygon points="19.5,6.5 25,10.5 23,10.5 23,17 16,17 16,10.5 14,10.5" fill="#000"/></svg>
<svg style="left:1487px;top:21px;overflow:hidden;" width="38" height="38" viewBox="0 0 38 38"><rect x="0" y="0" width="38" height="38" fill="#9cdcdc"/><path d="M0 38 L0 0 L38 0 L34 4 L4 4 L4 34 Z" fill="#bfeeee"/><path d="M38 0 L38 38 L0 38 L4 34 L34 34 L34 4 Z" fill="#6aa6a2"/><path d="M0 38 L0 0 L38 0 L36 2 L2 2 L2 36 Z" fill="#e6ffff"/><path d="M38 0 L38 38 L0 38 L2 36 L36 36 L36 2 Z" fill="#4a8a84"/><rect x="4.5" y="4.5" width="29" height="29" fill="#9cdcdc" stroke="#000" stroke-width="1.2"/><rect x="12" y="11" width="15" height="15" fill="none" stroke="#000" stroke-width="2"/><polygon points="16,21 23,21 23,28 25.5,28 19.5,32.5 13.5,28 16,28" fill="#000"/></svg>
<svg style="left:1527px;top:21px;overflow:hidden;" width="38" height="38" viewBox="0 0 38 38"><rect x="0" y="0" width="38" height="38" fill="#9cdcdc"/><path d="M0 38 L0 0 L38 0 L34 4 L4 4 L4 34 Z" fill="#bfeeee"/><path d="M38 0 L38 38 L0 38 L4 34 L34 34 L34 4 Z" fill="#6aa6a2"/><path d="M0 38 L0 0 L38 0 L36 2 L2 2 L2 36 Z" fill="#e6ffff"/><path d="M38 0 L38 38 L0 38 L2 36 L36 36 L36 2 Z" fill="#4a8a84"/><rect x="4.5" y="4.5" width="29" height="29" fill="#9cdcdc" stroke="#000" stroke-width="1.2"/><path d="M8.5 18.6 L18.6 8.4 L28.8 18.6" fill="none" stroke="#000" stroke-width="1.6"/><path d="M11.3 18 L11.3 29.8 L25.8 29.8 L25.8 18" fill="none" stroke="#000" stroke-width="2"/><rect x="23.6" y="10.5" width="2.6" height="5" fill="none" stroke="#000" stroke-width="1"/><path d="M25 8.3 L27 6.6" stroke="#000" stroke-width="1"/><rect x="13" y="23.5" width="2.4" height="2.4" fill="none" stroke="#000" stroke-width="1"/><path d="M18 30 L18 23.6 L22 23.6 L22 30" fill="none" stroke="#000" stroke-width="1.2"/></svg>
<svg style="left:1567px;top:21px;overflow:hidden;" width="33" height="38" viewBox="0 0 33 38"><rect x="0" y="0" width="38" height="38" fill="#9cdcdc"/><path d="M0 38 L0 0 L38 0 L34 4 L4 4 L4 34 Z" fill="#bfeeee"/><path d="M38 0 L38 38 L0 38 L4 34 L34 34 L34 4 Z" fill="#6aa6a2"/><path d="M0 38 L0 0 L38 0 L36 2 L2 2 L2 36 Z" fill="#e6ffff"/><path d="M38 0 L38 38 L0 38 L2 36 L36 36 L36 2 Z" fill="#4a8a84"/><rect x="4.5" y="4.5" width="29" height="29" fill="#9cdcdc" stroke="#000" stroke-width="1.2"/><rect x="8.5" y="8.5" width="30" height="21" fill="none" stroke="#000" stroke-width="2.4"/><path d="M19.3 8 L19.3 30 M8 24 L38 24" stroke="#000" stroke-width="1"/><text x="21" y="22.5" font-family="Liberation Sans,sans-serif" font-size="6" font-weight="bold" fill="#000">xy</text></svg>
<svg style="left:1447px;top:61px;overflow:hidden;" width="38" height="38" viewBox="0 0 38 38"><rect x="0" y="0" width="38" height="38" fill="#9cdcdc"/><path d="M0 38 L0 0 L38 0 L34 4 L4 4 L4 34 Z" fill="#bfeeee"/><path d="M38 0 L38 38 L0 38 L4 34 L34 34 L34 4 Z" fill="#6aa6a2"/><path d="M0 38 L0 0 L38 0 L36 2 L2 2 L2 36 Z" fill="#e6ffff"/><path d="M38 0 L38 38 L0 38 L2 36 L36 36 L36 2 Z" fill="#4a8a84"/><rect x="4.5" y="4.5" width="29" height="29" fill="#9cdcdc" stroke="#000" stroke-width="1.2"/><rect x="13" y="11" width="15" height="15" fill="none" stroke="#000" stroke-width="2"/><polygon points="6.2,18.5 10.5,12.5 10.5,15 17,15 17,22 10.5,22 10.5,24.5" fill="#000"/></svg>
<svg style="left:1487px;top:61px;overflow:hidden;" width="38" height="38" viewBox="0 0 38 38"><rect x="0" y="0" width="38" height="38" fill="#9cdcdc"/><path d="M0 38 L0 0 L38 0 L34 4 L4 4 L4 34 Z" fill="#bfeeee"/><path d="M38 0 L38 38 L0 38 L4 34 L34 34 L34 4 Z" fill="#6aa6a2"/><path d="M0 38 L0 0 L38 0 L36 2 L2 2 L2 36 Z" fill="#e6ffff"/><path d="M38 0 L38 38 L0 38 L2 36 L36 36 L36 2 Z" fill="#4a8a84"/><rect x="4.5" y="4.5" width="29" height="29" fill="#9cdcdc" stroke="#000" stroke-width="1.2"/><rect x="10" y="11" width="15" height="15" fill="none" stroke="#000" stroke-width="2"/><polygon points="32,18.5 27.7,12.5 27.7,15 21,15 21,22 27.7,22 27.7,24.5" fill="#000"/></svg>
<svg style="left:1527px;top:61px;overflow:hidden;" width="38" height="38" viewBox="0 0 38 38"><rect x="0" y="0" width="38" height="38" fill="#9cdcdc"/><path d="M0 38 L0 0 L38 0 L34 4 L4 4 L4 34 Z" fill="#bfeeee"/><path d="M38 0 L38 38 L0 38 L4 34 L34 34 L34 4 Z" fill="#6aa6a2"/><path d="M0 38 L0 0 L38 0 L36 2 L2 2 L2 36 Z" fill="#e6ffff"/><path d="M38 0 L38 38 L0 38 L2 36 L36 36 L36 2 Z" fill="#4a8a84"/><rect x="4.5" y="4.5" width="29" height="29" fill="#9cdcdc" stroke="#000" stroke-width="1.2"/><rect x="18.2" y="13" width="12" height="13" fill="none" stroke="#000" stroke-width="2"/><path d="M9 15.8 L11.5 15.8 Q14 16 14 19 L14 22 Q14 25 11 25 L8 25" fill="none" stroke="#000" stroke-width="2.4"/><polygon points="5.8,15.8 10.2,11.8 10.2,19.6" fill="#000"/></svg>
<svg style="left:1567px;top:61px;overflow:hidden;" width="33" height="38" viewBox="0 0 33 38"><rect x="0" y="0" width="38" height="38" fill="#9cdcdc"/><path d="M0 38 L0 0 L38 0 L34 4 L4 4 L4 34 Z" fill="#bfeeee"/><path d="M38 0 L38 38 L0 38 L4 34 L34 34 L34 4 Z" fill="#6aa6a2"/><path d="M0 38 L0 0 L38 0 L36 2 L2 2 L2 36 Z" fill="#e6ffff"/><path d="M38 0 L38 38 L0 38 L2 36 L36 36 L36 2 Z" fill="#4a8a84"/><rect x="4.5" y="4.5" width="29" height="29" fill="#9cdcdc" stroke="#000" stroke-width="1.2"/><path d="M36 11.6 L10.8 11.6 L10.8 18.6 L28 18.6 L28 25.8 L9 25.8" fill="none" stroke="#000" stroke-width="2"/><path d="M33 9 L30.5 11.6 L33 14.2 M6.5 23 L9 25.8 L6.5 28.6" fill="none" stroke="#000" stroke-width="1"/></svg>
<svg style="left:1447px;top:101px;overflow:hidden;" width="38" height="38" viewBox="0 0 38 38"><rect x="0" y="0" width="38" height="38" fill="#9cdcdc"/><path d="M0 38 L0 0 L38 0 L34 4 L4 4 L4 34 Z" fill="#bfeeee"/><path d="M38 0 L38 38 L0 38 L4 34 L34 34 L34 4 Z" fill="#6aa6a2"/><path d="M0 38 L0 0 L38 0 L36 2 L2 2 L2 36 Z" fill="#e6ffff"/><path d="M38 0 L38 38 L0 38 L2 36 L36 36 L36 2 Z" fill="#4a8a84"/><rect x="4.5" y="4.5" width="29" height="29" fill="#9cdcdc" stroke="#000" stroke-width="1.2"/><rect x="12" y="12" width="14" height="14" fill="none" stroke="#000" stroke-width="2"/><polygon points="13,5.5 24,5.5 22,7 18.5,9.6 15,7" fill="#000"/><polygon points="13,32.5 24,32.5 22,31 18.5,28.4 15,31" fill="#000"/><polygon points="5,13.5 5,24.5 6.5,22.5 9.4,19 6.5,15.5" fill="#000"/><polygon points="33,13.5 33,24.5 31.5,22.5 28.6,19 31.5,15.5" fill="#000"/></svg>
<svg style="left:1487px;top:101px;overflow:hidden;" width="38" height="38" viewBox="0 0 38 38"><rect x="0" y="0" width="38" height="38" fill="#9cdcdc"/><path d="M0 38 L0 0 L38 0 L34 4 L4 4 L4 34 Z" fill="#bfeeee"/><path d="M38 0 L38 38 L0 38 L4 34 L34 34 L34 4 Z" fill="#6aa6a2"/><path d="M0 38 L0 0 L38 0 L36 2 L2 2 L2 36 Z" fill="#e6ffff"/><path d="M38 0 L38 38 L0 38 L2 36 L36 36 L36 2 Z" fill="#4a8a84"/><rect x="4.5" y="4.5" width="29" height="29" fill="#9cdcdc" stroke="#000" stroke-width="1.2"/><rect x="15" y="16" width="7" height="7" fill="none" stroke="#000" stroke-width="2"/><polygon points="18.5,8 24,12.4 13,12.4" fill="#000"/><polygon points="18.5,31 24,26.6 13,26.6" fill="#000"/><polygon points="7,19.5 11.6,14.5 11.6,24.5" fill="#000"/><polygon points="30.6,19.5 26,14.5 26,24.5" fill="#000"/></svg>
<svg style="left:1527px;top:101px;overflow:hidden;" width="38" height="38" viewBox="0 0 38 38"><rect x="0" y="0" width="38" height="38" fill="#9cdcdc"/><path d="M0 38 L0 0 L38 0 L34 4 L4 4 L4 34 Z" fill="#bfeeee"/><path d="M38 0 L38 38 L0 38 L4 34 L34 34 L34 4 Z" fill="#6aa6a2"/><path d="M0 38 L0 0 L38 0 L36 2 L2 2 L2 36 Z" fill="#e6ffff"/><path d="M38 0 L38 38 L0 38 L2 36 L36 36 L36 2 Z" fill="#4a8a84"/><rect x="4.5" y="4.5" width="29" height="29" fill="#9cdcdc" stroke="#000" stroke-width="1.2"/><text x="19" y="25" text-anchor="middle" font-family="Liberation Sans,sans-serif" font-size="14.5" font-weight="bold" fill="#000" letter-spacing="-0.6">1:2</text></svg>
<svg style="left:1567px;top:101px;overflow:hidden;" width="33" height="38" viewBox="0 0 33 38"><rect x="0" y="0" width="38" height="38" fill="#9cdcdc"/><path d="M0 38 L0 0 L38 0 L34 4 L4 4 L4 34 Z" fill="#bfeeee"/><path d="M38 0 L38 38 L0 38 L4 34 L34 34 L34 4 Z" fill="#6aa6a2"/><path d="M0 38 L0 0 L38 0 L36 2 L2 2 L2 36 Z" fill="#e6ffff"/><path d="M38 0 L38 38 L0 38 L2 36 L36 36 L36 2 Z" fill="#4a8a84"/><rect x="4.5" y="4.5" width="29" height="29" fill="#9cdcdc" stroke="#000" stroke-width="1.2"/><rect x="8.5" y="8.5" width="30" height="22" fill="none" stroke="#000" stroke-width="2.4"/><text x="20.5" y="26" text-anchor="middle" font-family="Liberation Sans,sans-serif" font-size="15" font-weight="bold" fill="#000">?</text></svg>
<svg style="left:1447px;top:141px;overflow:hidden;" width="38" height="38" viewBox="0 0 38 38"><rect x="0" y="0" width="38" height="38" fill="#9cdcdc"/><path d="M0 38 L0 0 L38 0 L34 4 L4 4 L4 34 Z" fill="#bfeeee"/><path d="M38 0 L38 38 L0 38 L4 34 L34 34 L34 4 Z" fill="#6aa6a2"/><path d="M0 38 L0 0 L38 0 L36 2 L2 2 L2 36 Z" fill="#e6ffff"/><path d="M38 0 L38 38 L0 38 L2 36 L36 36 L36 2 Z" fill="#4a8a84"/><rect x="4.5" y="4.5" width="29" height="29" fill="#9cdcdc" stroke="#000" stroke-width="1.2"/><rect x="7" y="8.2" width="16" height="2.6" fill="#000"/><path d="M29.5 7 A3.6 3.6 0 1 0 29.5 12 L27 11 L25.5 9.5 L27 8 Z" fill="#000"/><path d="M7.5 16.2 L10 14.6 L30.5 14.6 L30.5 18 L10 18 Z M10 14.6 L10 18" fill="none" stroke="#000" stroke-width="1"/><path d="M15 26 Q15 21 21 20.4 Q28 20 27.5 24 Q27 28 23 30 Q17 32 15 29 Z" fill="none" stroke="#000" stroke-width="1.1"/><circle cx="18.5" cy="25" r="0.9" fill="none" stroke="#000" stroke-width=".7"/><circle cx="21.5" cy="23" r="0.9" fill="none" stroke="#000" stroke-width=".7"/><circle cx="24.5" cy="24" r="0.9" fill="none" stroke="#000" stroke-width=".7"/><circle cx="18" cy="28" r="0.9" fill="#000"/></svg>
<svg style="left:1487px;top:141px;overflow:hidden;" width="38" height="38" viewBox="0 0 38 38"><rect x="0" y="0" width="38" height="38" fill="#9cdcdc"/><path d="M0 38 L0 0 L38 0 L34 4 L4 4 L4 34 Z" fill="#bfeeee"/><path d="M38 0 L38 38 L0 38 L4 34 L34 34 L34 4 Z" fill="#6aa6a2"/><path d="M0 38 L0 0 L38 0 L36 2 L2 2 L2 36 Z" fill="#e6ffff"/><path d="M38 0 L38 38 L0 38 L2 36 L36 36 L36 2 Z" fill="#4a8a84"/><rect x="4.5" y="4.5" width="29" height="29" fill="#9cdcdc" stroke="#000" stroke-width="1.2"/><path d="M13 5 L13 33 M23 5 L23 33 M5 14.5 L33 14.5 M5 26 L33 26" stroke="#c6c0c8" stroke-width="1"/><circle cx="14" cy="20" r="5.8" fill="#000"/><rect x="19" y="18" width="13" height="4" fill="#000"/><rect x="11.6" y="17.6" width="4.8" height="4.8" fill="#e02020"/><rect x="13" y="19" width="2" height="2" fill="#ff7070"/></svg>
<svg style="left:1527px;top:141px;overflow:hidden;" width="38" height="38" viewBox="0 0 38 38"><rect x="0" y="0" width="38" height="38" fill="#b42020"/><path d="M0 38 L0 0 L38 0 L37 1 L1 1 L1 37 Z" fill="#ffd8d8"/><path d="M38 0 L38 38 L0 38 L1 37 L37 37 L37 1 Z" fill="#7a1818"/><rect x="4.5" y="4.5" width="29" height="29" fill="#9cdcdc" stroke="#000" stroke-width="1.2"/><path d="M8.5 5 L8.5 17.5 L19 17.5 L19 33" fill="none" stroke="#f02020" stroke-width="1.1"/><path d="M20.2 19 L20.2 33" stroke="#ffd0d0" stroke-width="1"/><path d="M16.5 8.5 L16.5 27.5 L10.5 27.5" fill="none" stroke="#0000ff" stroke-width="1.2"/><circle cx="8.5" cy="17.5" r="2.6" fill="#ff0000"/><circle cx="16.5" cy="8.5" r="2.6" fill="#0000ff"/><circle cx="10.5" cy="27.5" r="2.6" fill="#0000ff"/><rect x="21" y="6" width="10.5" height="26" fill="#9cdcdc" stroke="#000" stroke-width="1"/><circle cx="26.2" cy="11" r="2.4" fill="#e8ffff" stroke="#000" stroke-width=".8"/><circle cx="26.2" cy="19.3" r="3.3" fill="#fdc24c" stroke="#806020" stroke-width=".6"/><circle cx="26.2" cy="27.6" r="2.4" fill="#e8ffff" stroke="#000" stroke-width=".8"/></svg>
<svg style="left:1567px;top:141px;overflow:hidden;" width="33" height="38" viewBox="0 0 33 38"><rect x="0" y="0" width="38" height="38" fill="#b42020"/><path d="M0 38 L0 0 L38 0 L37 1 L1 1 L1 37 Z" fill="#ffd8d8"/><path d="M38 0 L38 38 L0 38 L1 37 L37 37 L37 1 Z" fill="#7a1818"/><rect x="4.5" y="4.5" width="29" height="29" fill="#9cdcdc" stroke="#000" stroke-width="1.2"/><path d="M8.5 5 L8.5 17.5" fill="none" stroke="#000" stroke-width="1.1"/><path d="M16.5 8.5 L16.5 27.5 L10.5 27.5" fill="none" stroke="#000" stroke-width="1.2"/><path d="M10.5 17.2 L15.5 17.2 M12 17 L12 14.5 M13.7 17 L13.7 14.5 M15.3 17 L15.3 14.5" stroke="#f02020" stroke-width="1"/><circle cx="8.5" cy="17.5" r="2.6" fill="#000"/><circle cx="16.5" cy="8.5" r="2.6" fill="#000"/><circle cx="10.5" cy="27.5" r="2.6" fill="#000"/><rect x="21" y="6" width="10.5" height="26" fill="#9cdcdc" stroke="#000" stroke-width="1"/><circle cx="26.2" cy="11" r="3.2" fill="#ff0000" stroke="#600" stroke-width=".6"/><circle cx="26.2" cy="19.3" r="2.4" fill="#e8ffff" stroke="#000" stroke-width=".8"/><circle cx="26.2" cy="27.6" r="2.4" fill="#e8ffff" stroke="#000" stroke-width=".8"/></svg>
<svg style="left:1447px;top:185px;overflow:hidden;" width="38" height="38" viewBox="0 0 38 38"><rect x="0" y="0" width="38" height="38" fill="#ffffff"/><path d="M0 38 L0 0 L38 0 L34 4 L4 4 L4 34 Z" fill="#ffffff"/><path d="M38 0 L38 38 L0 38 L4 34 L34 34 L34 4 Z" fill="#c4c4c4"/><path d="M0 38 L0 0 L38 0 L36 2 L2 2 L2 36 Z" fill="#e2e2e2"/><path d="M38 0 L38 38 L0 38 L2 36 L36 36 L36 2 Z" fill="#9a9a9a"/><rect x="4.5" y="4.5" width="29" height="29" fill="#ffffff" stroke="#000" stroke-width="1.2"/><rect x="11.5" y="12.5" width="14" height="15" fill="none" stroke="#000" stroke-width="1.2"/><circle cx="18.5" cy="20" r="5.8" fill="#000"/><path d="M23 15 L29.5 8.5" stroke="#000" stroke-width="2.4"/><polygon points="32.2,5.8 32.2,12.4 25.6,5.8" fill="#000"/></svg>
<svg style="left:1487px;top:185px;overflow:hidden;" width="38" height="38" viewBox="0 0 38 38"><rect x="0" y="0" width="38" height="38" fill="#ffffff"/><path d="M0 38 L0 0 L38 0 L34 4 L4 4 L4 34 Z" fill="#ffffff"/><path d="M38 0 L38 38 L0 38 L4 34 L34 34 L34 4 Z" fill="#ffffff"/><path d="M0 38 L0 0 L38 0 L36 2 L2 2 L2 36 Z" fill="#a0a0a0"/><path d="M38 0 L38 38 L0 38 L2 36 L36 36 L36 2 Z" fill="#ffffff"/><rect x="4.5" y="4.5" width="29" height="29" fill="#ffffff" stroke="#000" stroke-width="1.2"/><rect x="5" y="5" width="28" height="28" fill="#000"/><rect x="18.2" y="8" width="12" height="12" fill="#000030" stroke="#ff1010" stroke-width="2.4"/><rect x="7.6" y="24.2" width="6.6" height="6.6" fill="#000030" stroke="#0000ff" stroke-width="2.2"/><path d="M7 23 L17 7.5 M15.5 30.5 L30.5 21" stroke="#fff" stroke-width="1"/></svg>
<svg style="left:1527px;top:185px;overflow:hidden;" width="38" height="38" viewBox="0 0 38 38"><rect x="0" y="0" width="38" height="38" fill="#ffffff"/><path d="M0 38 L0 0 L38 0 L34 4 L4 4 L4 34 Z" fill="#ffffff"/><path d="M38 0 L38 38 L0 38 L4 34 L34 34 L34 4 Z" fill="#c4c4c4"/><path d="M0 38 L0 0 L38 0 L36 2 L2 2 L2 36 Z" fill="#e2e2e2"/><path d="M38 0 L38 38 L0 38 L2 36 L36 36 L36 2 Z" fill="#9a9a9a"/><rect x="4.5" y="4.5" width="29" height="29" fill="#ffffff" stroke="#000" stroke-width="1.2"/><path d="M7 14.5 L32 14.5 L32 23 L7 23 Z" fill="#000"/><path d="M8.5 14 L8.5 18 M10.6 14 L10.6 17 M12.7 14 L12.7 19.5 M14.8 14 L14.8 17 M16.9 14 L16.9 18 M19 14 L19 17 M21.1 14 L21.1 19.5 M23.2 14 L23.2 17 M25.3 14 L25.3 18 M27.4 14 L27.4 17 M29.5 14 L29.5 19.5 M31 14 L31 17" stroke="#fff" stroke-width="1.1"/></svg>
<svg style="left:1567px;top:185px;overflow:hidden;" width="33" height="38" viewBox="0 0 33 38"><rect x="0" y="0" width="38" height="38" fill="#ffffff"/><path d="M0 38 L0 0 L38 0 L34 4 L4 4 L4 34 Z" fill="#ffffff"/><path d="M38 0 L38 38 L0 38 L4 34 L34 34 L34 4 Z" fill="#c4c4c4"/><path d="M0 38 L0 0 L38 0 L36 2 L2 2 L2 36 Z" fill="#e2e2e2"/><path d="M38 0 L38 38 L0 38 L2 36 L36 36 L36 2 Z" fill="#9a9a9a"/><rect x="4.5" y="4.5" width="29" height="29" fill="#ffffff" stroke="#000" stroke-width="1.2"/><rect x="8" y="8" width="22" height="22.5" fill="none" stroke="#000" stroke-width="1.2" stroke-dasharray="2.2 1.3"/><polygon points="16,12 22.5,12 26,15.5 26,23 22.5,26.5 16,26.5 12.5,23 12.5,15.5" fill="#000"/></svg>
<svg style="left:1447px;top:225px;overflow:hidden;" width="38" height="38" viewBox="0 0 38 38"><rect x="0" y="0" width="38" height="38" fill="#d4d4d4"/><path d="M0 38 L0 0 L38 0 L34 4 L4 4 L4 34 Z" fill="#ececec"/><path d="M38 0 L38 38 L0 38 L4 34 L34 34 L34 4 Z" fill="#aaaaaa"/><path d="M0 38 L0 0 L38 0 L36 2 L2 2 L2 36 Z" fill="#ffffff"/><path d="M38 0 L38 38 L0 38 L2 36 L36 36 L36 2 Z" fill="#888888"/><rect x="4.5" y="4.5" width="29" height="29" fill="#d4d4d4" stroke="#000" stroke-width="1.2"/><path d="M11.5 11 L11.5 26.5 L26.5 26.5" fill="none" stroke="#0000ff" stroke-width="3"/><circle cx="11.5" cy="11" r="4.6" fill="#0000ff"/><circle cx="11.5" cy="26.5" r="4.6" fill="#0000ff"/><circle cx="26.5" cy="26.5" r="4.6" fill="#0000ff"/><circle cx="26.5" cy="11" r="4.6" fill="#ff0000"/></svg>
<svg style="left:1487px;top:225px;overflow:hidden;" width="38" height="38" viewBox="0 0 38 38"><rect x="0" y="0" width="38" height="38" fill="#d4d4d4"/><path d="M0 38 L0 0 L38 0 L34 4 L4 4 L4 34 Z" fill="#ececec"/><path d="M38 0 L38 38 L0 38 L4 34 L34 34 L34 4 Z" fill="#aaaaaa"/><path d="M0 38 L0 0 L38 0 L36 2 L2 2 L2 36 Z" fill="#ffffff"/><path d="M38 0 L38 38 L0 38 L2 36 L36 36 L36 2 Z" fill="#888888"/><rect x="4.5" y="4.5" width="29" height="29" fill="#d4d4d4" stroke="#000" stroke-width="1.2"/><circle cx="18.8" cy="19.5" r="4.6" fill="#0000d0"/><path d="M11.5 12.5 L26.5 26.5 M26.5 12.5 L11.5 26.5" stroke="#000" stroke-width="1.8"/></svg>
<svg style="left:1527px;top:225px;overflow:hidden;" width="38" height="38" viewBox="0 0 38 38"><rect x="0" y="0" width="38" height="38" fill="#d4d4d4"/><path d="M0 38 L0 0 L38 0 L34 4 L4 4 L4 34 Z" fill="#ececec"/><path d="M38 0 L38 38 L0 38 L4 34 L34 34 L34 4 Z" fill="#aaaaaa"/><path d="M0 38 L0 0 L38 0 L36 2 L2 2 L2 36 Z" fill="#ffffff"/><path d="M38 0 L38 38 L0 38 L2 36 L36 36 L36 2 Z" fill="#888888"/><rect x="4.5" y="4.5" width="29" height="29" fill="#d4d4d4" stroke="#000" stroke-width="1.2"/><circle cx="26.5" cy="11" r="4.6" fill="#ff0000"/><circle cx="11.5" cy="26.5" r="3.5" fill="#e0e0ff" stroke="#0000ff" stroke-width="2"/><path d="M16 22.5 L21.5 17" stroke="#000" stroke-width="1"/><polygon points="22.6,16 22.2,19.2 19.4,16.4" fill="#000"/></svg>
<svg style="left:1567px;top:225px;overflow:hidden;" width="33" height="38" viewBox="0 0 33 38"><rect x="0" y="0" width="38" height="38" fill="#d4d4d4"/><path d="M0 38 L0 0 L38 0 L34 4 L4 4 L4 34 Z" fill="#ececec"/><path d="M38 0 L38 38 L0 38 L4 34 L34 34 L34 4 Z" fill="#aaaaaa"/><path d="M0 38 L0 0 L38 0 L36 2 L2 2 L2 36 Z" fill="#ffffff"/><path d="M38 0 L38 38 L0 38 L2 36 L36 36 L36 2 Z" fill="#888888"/><rect x="4.5" y="4.5" width="29" height="29" fill="#d4d4d4" stroke="#000" stroke-width="1.2"/><circle cx="26.5" cy="11" r="4.6" fill="#ff0000"/><circle cx="11.5" cy="26.5" r="4.6" fill="#0000ff"/><path d="M16 22.5 L21.5 17" stroke="#000" stroke-width="1"/><polygon points="22.6,16 22.2,19.2 19.4,16.4" fill="#000"/></svg>
<svg style="left:1447px;top:265px;overflow:hidden;" width="38" height="38" viewBox="0 0 38 38"><rect x="0" y="0" width="38" height="38" fill="#d4d4d4"/><path d="M0 38 L0 0 L38 0 L34 4 L4 4 L4 34 Z" fill="#ececec"/><path d="M38 0 L38 38 L0 38 L4 34 L34 34 L34 4 Z" fill="#aaaaaa"/><path d="M0 38 L0 0 L38 0 L36 2 L2 2 L2 36 Z" fill="#ffffff"/><path d="M38 0 L38 38 L0 38 L2 36 L36 36 L36 2 Z" fill="#888888"/><rect x="4.5" y="4.5" width="29" height="29" fill="#d4d4d4" stroke="#000" stroke-width="1.2"/><path d="M10 26 L27.5 9.5" stroke="#e00000" stroke-width="2.4" stroke-linecap="round"/><path d="M11.5 28.8 L28.5 28.8" stroke="#0000e0" stroke-width="2.6" stroke-linecap="round"/><path d="M26.5 24 L23.6 21.2 M23.4 23.4 L23.4 21 L25.8 21" stroke="#000" stroke-width="1" fill="none"/></svg>
<svg style="left:1487px;top:265px;overflow:hidden;" width="38" height="38" viewBox="0 0 38 38"><rect x="0" y="0" width="38" height="38" fill="#d4d4d4"/><path d="M0 38 L0 0 L38 0 L34 4 L4 4 L4 34 Z" fill="#ececec"/><path d="M38 0 L38 38 L0 38 L4 34 L34 34 L34 4 Z" fill="#aaaaaa"/><path d="M0 38 L0 0 L38 0 L36 2 L2 2 L2 36 Z" fill="#ffffff"/><path d="M38 0 L38 38 L0 38 L2 36 L36 36 L36 2 Z" fill="#888888"/><rect x="4.5" y="4.5" width="29" height="29" fill="#d4d4d4" stroke="#000" stroke-width="1.2"/><path d="M10 26 L19 17.5" stroke="#0000e0" stroke-width="2.4" stroke-linecap="round"/><path d="M19 17.5 L27.5 9.5" stroke="#e00000" stroke-width="2.4" stroke-linecap="round"/><path d="M21 24.5 L24 21.6 M21.8 21.4 L24.2 21.4 L24.2 23.8" stroke="#000" stroke-width="1" fill="none"/></svg>
<svg style="left:1527px;top:265px;overflow:hidden;" width="38" height="38" viewBox="0 0 38 38"><rect x="0" y="0" width="38" height="38" fill="#d4d4d4"/><path d="M0 38 L0 0 L38 0 L34 4 L4 4 L4 34 Z" fill="#ececec"/><path d="M38 0 L38 38 L0 38 L4 34 L34 34 L34 4 Z" fill="#aaaaaa"/><path d="M0 38 L0 0 L38 0 L36 2 L2 2 L2 36 Z" fill="#ffffff"/><path d="M38 0 L38 38 L0 38 L2 36 L36 36 L36 2 Z" fill="#888888"/><rect x="4.5" y="4.5" width="29" height="29" fill="#d4d4d4" stroke="#000" stroke-width="1.2"/><path d="M17.5 12 Q24.5 12.5 24.5 19 Q24.5 25.5 16 26" fill="none" stroke="#000" stroke-width="1.5"/><polygon points="13.8,26.2 17.4,23.2 17.4,29" fill="#000"/></svg>
<svg style="left:1567px;top:265px;overflow:hidden;" width="33" height="38" viewBox="0 0 33 38"><rect x="0" y="0" width="38" height="38" fill="#d4d4d4"/><path d="M0 38 L0 0 L38 0 L34 4 L4 4 L4 34 Z" fill="#ececec"/><path d="M38 0 L38 38 L0 38 L4 34 L34 34 L34 4 Z" fill="#aaaaaa"/><path d="M0 38 L0 0 L38 0 L36 2 L2 2 L2 36 Z" fill="#ffffff"/><path d="M38 0 L38 38 L0 38 L2 36 L36 36 L36 2 Z" fill="#888888"/><rect x="4.5" y="4.5" width="29" height="29" fill="#d4d4d4" stroke="#000" stroke-width="1.2"/><path d="M19.6 7 L19.6 31" stroke="#000" stroke-width="1"/><path d="M16.5 27.5 L16.5 11 L8.5 11 M16.5 19 L10 19" fill="none" stroke="#0000ff" stroke-width="2.2"/><path d="M23 27.5 L23 11 L31 11 M23 19 L29.5 19" fill="none" stroke="#ff0000" stroke-width="2.2"/></svg>
<svg style="left:1447px;top:305px;overflow:hidden;" width="38" height="38" viewBox="0 0 38 38"><rect x="0" y="0" width="38" height="38" fill="#d4d4d4"/><path d="M0 38 L0 0 L38 0 L34 4 L4 4 L4 34 Z" fill="#ececec"/><path d="M38 0 L38 38 L0 38 L4 34 L34 34 L34 4 Z" fill="#aaaaaa"/><path d="M0 38 L0 0 L38 0 L36 2 L2 2 L2 36 Z" fill="#ffffff"/><path d="M38 0 L38 38 L0 38 L2 36 L36 36 L36 2 Z" fill="#888888"/><rect x="4.5" y="4.5" width="29" height="29" fill="#d4d4d4" stroke="#000" stroke-width="1.2"/><rect x="21" y="6" width="11" height="10.5" fill="#ff0000"/><circle cx="26.5" cy="11.3" r="3" fill="#d8d8d8"/><rect x="6.5" y="21.5" width="10.5" height="10.5" fill="#e0e0ff" stroke="#0000d0" stroke-width="1"/><circle cx="11.7" cy="26.7" r="3.4" fill="#0000ff"/><path d="M18 21 L20.5 18.8" stroke="#000" stroke-width="1"/><polygon points="21.6,17.6 21.4,20.6 18.6,18" fill="#000"/></svg>
<svg style="left:1487px;top:305px;overflow:hidden;" width="38" height="38" viewBox="0 0 38 38"><rect x="0" y="0" width="38" height="38" fill="#d4d4d4"/><path d="M0 38 L0 0 L38 0 L34 4 L4 4 L4 34 Z" fill="#ececec"/><path d="M38 0 L38 38 L0 38 L4 34 L34 34 L34 4 Z" fill="#aaaaaa"/><path d="M0 38 L0 0 L38 0 L36 2 L2 2 L2 36 Z" fill="#ffffff"/><path d="M38 0 L38 38 L0 38 L2 36 L36 36 L36 2 Z" fill="#888888"/><rect x="4.5" y="4.5" width="29" height="29" fill="#d4d4d4" stroke="#000" stroke-width="1.2"/><path d="M9.5 18.6 L29.5 18.6" stroke="#f00000" stroke-width="2.8" stroke-linecap="round"/><path d="M17.5 18.6 L22 18.6" stroke="#0000ff" stroke-width="2.8"/></svg>
<svg style="left:1527px;top:305px;overflow:hidden;" width="38" height="38" viewBox="0 0 38 38"><rect x="0" y="0" width="38" height="38" fill="#d4d4d4"/><path d="M0 38 L0 0 L38 0 L34 4 L4 4 L4 34 Z" fill="#ececec"/><path d="M38 0 L38 38 L0 38 L4 34 L34 34 L34 4 Z" fill="#aaaaaa"/><path d="M0 38 L0 0 L38 0 L36 2 L2 2 L2 36 Z" fill="#ffffff"/><path d="M38 0 L38 38 L0 38 L2 36 L36 36 L36 2 Z" fill="#888888"/><rect x="4.5" y="4.5" width="29" height="29" fill="#d4d4d4" stroke="#000" stroke-width="1.2"/><path d="M8.5 8 L8.5 31 M29.5 8 L29.5 31" stroke="#000" stroke-width="1.2"/><path d="M9.5 19.5 L28.5 19.5 M12 17 L9.5 19.5 L12 22 M26 17 L28.5 19.5 L26 22" fill="none" stroke="#0000d0" stroke-width="1"/><rect x="15.2" y="14.4" width="7.6" height="9.4" fill="#d0d0ff" stroke="#0000d0" stroke-width="1.1"/><text x="19" y="22.6" text-anchor="middle" font-family="Liberation Sans,sans-serif" font-size="9" font-weight="bold" fill="#0000d0">4</text></svg>
<svg style="left:1567px;top:305px;overflow:hidden;" width="33" height="38" viewBox="0 0 33 38"><rect x="0" y="0" width="38" height="38" fill="#d4d4d4"/><path d="M0 38 L0 0 L38 0 L34 4 L4 4 L4 34 Z" fill="#ececec"/><path d="M38 0 L38 38 L0 38 L4 34 L34 34 L34 4 Z" fill="#aaaaaa"/><path d="M0 38 L0 0 L38 0 L36 2 L2 2 L2 36 Z" fill="#ffffff"/><path d="M38 0 L38 38 L0 38 L2 36 L36 36 L36 2 Z" fill="#888888"/><rect x="4.5" y="4.5" width="29" height="29" fill="#d4d4d4" stroke="#000" stroke-width="1.2"/><path d="M8 10 L23 10 L23 17 L33 17 L33 30 L17 30 L17 26.5 L10 26.5 L10 21 L8 21 Z" fill="#0000ff"/><circle cx="13.6" cy="15.4" r="3.4" fill="#d8d8d8"/><circle cx="22.5" cy="24" r="4.2" fill="#d8d8d8"/></svg>
<svg style="left:1447px;top:345px;overflow:hidden;" width="38" height="38" viewBox="0 0 38 38"><rect x="0" y="0" width="38" height="38" fill="#d4d4d4"/><path d="M0 38 L0 0 L38 0 L34 4 L4 4 L4 34 Z" fill="#ececec"/><path d="M38 0 L38 38 L0 38 L4 34 L34 34 L34 4 Z" fill="#aaaaaa"/><path d="M0 38 L0 0 L38 0 L36 2 L2 2 L2 36 Z" fill="#ffffff"/><path d="M38 0 L38 38 L0 38 L2 36 L36 36 L36 2 Z" fill="#888888"/><rect x="4.5" y="4.5" width="29" height="29" fill="#d4d4d4" stroke="#000" stroke-width="1.2"/><path d="M8.5 27 L21.5 13 L29.5 27" fill="none" stroke="#e80000" stroke-width="2.4"/><path d="M9.5 26.6 L29 26.6" stroke="#0000e8" stroke-width="2.6"/><path d="M20 23 L20 19.5" stroke="#000" stroke-width="1.2" fill="none"/><path d="M17.8 21.7 L20 19.2 L22.2 21.7" stroke="#000" stroke-width="1.2" fill="none"/></svg>
<svg style="left:1487px;top:345px;overflow:hidden;" width="38" height="38" viewBox="0 0 38 38"><rect x="0" y="0" width="38" height="38" fill="#d4d4d4"/><path d="M0 38 L0 0 L38 0 L34 4 L4 4 L4 34 Z" fill="#ececec"/><path d="M38 0 L38 38 L0 38 L4 34 L34 34 L34 4 Z" fill="#aaaaaa"/><path d="M0 38 L0 0 L38 0 L36 2 L2 2 L2 36 Z" fill="#ffffff"/><path d="M38 0 L38 38 L0 38 L2 36 L36 36 L36 2 Z" fill="#888888"/><rect x="4.5" y="4.5" width="29" height="29" fill="#d4d4d4" stroke="#000" stroke-width="1.2"/><path d="M7 33 L18.5 7.5 L30 33" fill="none" stroke="#e80000" stroke-width="2"/><path d="M9.5 33.5 L18.5 23.5 L27.5 33.5" fill="none" stroke="#0000e8" stroke-width="2.6"/><path d="M19 21.5 L19 15.5" stroke="#000" stroke-width="1.2" fill="none"/><path d="M16.8 17.7 L19 15.2 L21.2 17.7" stroke="#000" stroke-width="1.2" fill="none"/></svg>
<svg style="left:1527px;top:345px;overflow:hidden;" width="38" height="38" viewBox="0 0 38 38"><rect x="0" y="0" width="38" height="38" fill="#d4d4d4"/><path d="M0 38 L0 0 L38 0 L34 4 L4 4 L4 34 Z" fill="#ececec"/><path d="M38 0 L38 38 L0 38 L4 34 L34 34 L34 4 Z" fill="#aaaaaa"/><path d="M0 38 L0 0 L38 0 L36 2 L2 2 L2 36 Z" fill="#ffffff"/><path d="M38 0 L38 38 L0 38 L2 36 L36 36 L36 2 Z" fill="#888888"/><rect x="4.5" y="4.5" width="29" height="29" fill="#d4d4d4" stroke="#000" stroke-width="1.2"/><path d="M9.5 24 L15 9.8 L25 9.8 L30.5 24" fill="none" stroke="#e80000" stroke-width="3"/><path d="M5.5 33 L8.5 24.6 L31.5 24.6 L34 33" fill="none" stroke="#0000e8" stroke-width="2.6"/><path d="M19.5 21.5 L19.5 15.5" stroke="#000" stroke-width="1.2" fill="none"/><path d="M17.3 17.7 L19.5 15.2 L21.7 17.7" stroke="#000" stroke-width="1.2" fill="none"/></svg>
<svg style="left:1567px;top:345px;overflow:hidden;" width="33" height="38" viewBox="0 0 33 38"><rect x="0" y="0" width="38" height="38" fill="#d4d4d4"/><path d="M0 38 L0 0 L38 0 L34 4 L4 4 L4 34 Z" fill="#ececec"/><path d="M38 0 L38 38 L0 38 L4 34 L34 34 L34 4 Z" fill="#aaaaaa"/><path d="M0 38 L0 0 L38 0 L36 2 L2 2 L2 36 Z" fill="#ffffff"/><path d="M38 0 L38 38 L0 38 L2 36 L36 36 L36 2 Z" fill="#888888"/><rect x="4.5" y="4.5" width="29" height="29" fill="#d4d4d4" stroke="#000" stroke-width="1.2"/><path d="M9.5 24 L15 9.8 L25 9.8 L30.5 24" fill="none" stroke="#e80000" stroke-width="3"/><path d="M5 24.6 L34 24.6" stroke="#0000e8" stroke-width="2.6"/><path d="M6 22 L11 27.4 M11 22 L6 27.4 M28 22 L33 27.4 M33 22 L28 27.4" stroke="#000" stroke-width="1"/><path d="M19.5 21.5 L19.5 15.5" stroke="#000" stroke-width="1.2" fill="none"/><path d="M17.3 17.7 L19.5 15.2 L21.7 17.7" stroke="#000" stroke-width="1.2" fill="none"/></svg>
<svg style="left:1447px;top:385px;overflow:hidden;" width="38" height="38" viewBox="0 0 38 38"><rect x="0" y="0" width="38" height="38" fill="#fdc24c"/><path d="M0 38 L0 0 L38 0 L34 4 L4 4 L4 34 Z" fill="#ffd884"/><path d="M38 0 L38 38 L0 38 L4 34 L34 34 L34 4 Z" fill="#c49a38"/><path d="M0 38 L0 0 L38 0 L36 2 L2 2 L2 36 Z" fill="#ffedb8"/><path d="M38 0 L38 38 L0 38 L2 36 L36 36 L36 2 Z" fill="#9a7420"/><rect x="4.5" y="4.5" width="29" height="29" fill="#fdc24c" stroke="#000" stroke-width="1.2"/><polygon points="15,10 15,20.8 17.6,19 21.4,26.8 24,25.4 20.4,18 23.6,17.6" fill="#000"/></svg>
<svg style="left:1487px;top:385px;overflow:hidden;" width="38" height="38" viewBox="0 0 38 38"><rect x="0" y="0" width="38" height="38" fill="#fdc24c"/><path d="M0 38 L0 0 L38 0 L34 4 L4 4 L4 34 Z" fill="#ffd884"/><path d="M38 0 L38 38 L0 38 L4 34 L34 34 L34 4 Z" fill="#c49a38"/><path d="M0 38 L0 0 L38 0 L36 2 L2 2 L2 36 Z" fill="#ffedb8"/><path d="M38 0 L38 38 L0 38 L2 36 L36 36 L36 2 Z" fill="#9a7420"/><rect x="4.5" y="4.5" width="29" height="29" fill="#fdc24c" stroke="#000" stroke-width="1.2"/><rect x="9.2" y="8.2" width="20" height="20.6" fill="none" stroke="#e02000" stroke-width="2"/><polygon points="15,10 15,20.8 17.6,19 21.4,26.8 24,25.4 20.4,18 23.6,17.6" fill="#000"/></svg>
<svg style="left:1527px;top:385px;overflow:hidden;" width="38" height="38" viewBox="0 0 38 38"><rect x="0" y="0" width="38" height="38" fill="#fdc24c"/><path d="M0 38 L0 0 L38 0 L34 4 L4 4 L4 34 Z" fill="#ffd884"/><path d="M38 0 L38 38 L0 38 L4 34 L34 34 L34 4 Z" fill="#c49a38"/><path d="M0 38 L0 0 L38 0 L36 2 L2 2 L2 36 Z" fill="#ffedb8"/><path d="M38 0 L38 38 L0 38 L2 36 L36 36 L36 2 Z" fill="#9a7420"/><rect x="4.5" y="4.5" width="29" height="29" fill="#fdc24c" stroke="#000" stroke-width="1.2"/><path d="M14 8 L30 8 L30 28.6 L15 28.6 L9 23 L9 12.5 Z" fill="none" stroke="#e02000" stroke-width="2"/><polygon points="15,10 15,20.8 17.6,19 21.4,26.8 24,25.4 20.4,18 23.6,17.6" fill="#000"/></svg>
<svg style="left:1567px;top:385px;overflow:hidden;" width="33" height="38" viewBox="0 0 33 38"><rect x="0" y="0" width="38" height="38" fill="#fdc24c"/><path d="M0 38 L0 0 L38 0 L34 4 L4 4 L4 34 Z" fill="#ffd884"/><path d="M38 0 L38 38 L0 38 L4 34 L34 34 L34 4 Z" fill="#c49a38"/><path d="M0 38 L0 0 L38 0 L36 2 L2 2 L2 36 Z" fill="#ffedb8"/><path d="M38 0 L38 38 L0 38 L2 36 L36 36 L36 2 Z" fill="#9a7420"/><rect x="4.5" y="4.5" width="29" height="29" fill="#fdc24c" stroke="#000" stroke-width="1.2"/><path d="M10 5 L10 20" stroke="#000" stroke-width="1.1"/><path d="M9.5 28.5 L16 28.5 L16 20 L19 20 L19 11.5 L27 11.5" fill="none" stroke="#000" stroke-width="1.1"/><circle cx="10" cy="20.5" r="2.2" fill="#e02020" stroke="#400" stroke-width=".6"/><circle cx="9.5" cy="28.5" r="2.2" fill="#20e020" stroke="#040" stroke-width=".6"/><circle cx="27" cy="11.5" r="2.2" fill="#20e020" stroke="#040" stroke-width=".6"/><polygon points="23.5,16.5 23.5,27.3 26.1,25.5 29.9,33.3 32.5,31.9 28.9,24.5 32.1,24.1" fill="#000"/></svg>
<div style="left:1444px;top:425px;width:156px;height:3px;background:linear-gradient(180deg,#2a6a5c,#3f9a86);"></div>
<div style="left:1444px;top:428px;width:3px;height:264px;background:#3a8f7d;"></div>
<div style="left:1447px;top:508px;width:153px;height:101px;background:#ff0000;border:1px solid #e000a0;border-right:none;"></div>
<div style="left:1452px;top:535px;width:68px;height:34px;background:transparent;border:2px solid #8cb4b8;"></div>
<svg style="left:1449px;top:564px;" width="9" height="9"><path d="M1 1 L8 8 M8 1 L1 8" stroke="#40d8f0" stroke-width="1"/></svg>
<div style="left:1444px;top:690px;width:156px;height:46px;background:#5ccbb0;border-top:2px solid #a8ecdc;border-bottom:2px solid #a8ecdc;border-left:2px solid #3a8f7d;"></div>
<span class="m" style="left:1449px;top:700px;font-size:14.85px;">X = -2.939296"</span>
<span class="m" style="left:1449px;top:715.6px;font-size:14.85px;">Y = 6.982096"</span>
<!-- s_bottom -->
<div style="left:8px;top:737px;width:1592px;height:33px;background:#ffffd6;"></div>
<div style="left:9px;top:737px;width:31px;height:32px;background:#ffffd6;border-style:solid;border-width:1px;border-color:#f4f4d0 #c8c8a0 #c8c8a0 #f4f4d0;"><div style="left:0px;top:0px;width:29px;height:30px;background:#ffffd6;border-style:solid;border-width:2px;border-color:#fffff0 #dedeb6 #dedeb6 #fffff0;"><svg style="left:3px;top:3px;" width="21" height="21"><rect x="0.6" y="0.6" width="19" height="19.6" fill="none" stroke="#000" stroke-width="1.2"/><path d="M4.5 4.5 L15.5 15.5 M4.5 9.5 L4.5 4.5 L9.5 4.5 M15.5 10.5 L15.5 15.5 L10.5 15.5" fill="none" stroke="#000" stroke-width="1.2"/><path d="M2.8 1 L2.8 17.8 L19 17.8" fill="none" stroke="#000" stroke-width="1"/></svg></div></div>
<div style="left:42px;top:737px;width:31px;height:32px;background:#ffffd6;border-style:solid;border-width:1px;border-color:#f4f4d0 #c8c8a0 #c8c8a0 #f4f4d0;"><div style="left:0px;top:0px;width:29px;height:30px;background:#ffffd6;border-style:solid;border-width:2px;border-color:#fffff0 #dedeb6 #dedeb6 #fffff0;"><svg style="left:3px;top:3px;" width="21" height="21"><rect x="0.6" y="0.6" width="19" height="19.6" fill="none" stroke="#000" stroke-width="1.2"/><path d="M2 17.5 L17 2.5 M2 17.5 L18 17.5 M6.5 3.5 L6.5 7.5 L9 7.5" fill="none" stroke="#000" stroke-width="1.1"/><path d="M6.8 17 A5 5 0 0 0 5.6 14" fill="none" stroke="#000" stroke-width="1"/><circle cx="11.8" cy="14.6" r="1.5" fill="none" stroke="#000" stroke-width=".9"/><path d="M16.6 13.2 L14.2 14.6 L16.6 16" fill="none" stroke="#000" stroke-width=".9"/></svg></div></div>
<div style="left:74px;top:738px;width:29px;height:32px;background:#5ccbb0;"><div style="left:3px;top:3px;width:23px;height:26px;background:#ffffd6;border-style:solid;border-width:2px;border-color:#fffff0 #c6c698 #c6c698 #fffff0;"><svg style="left:2px;top:3px;" width="16" height="17"><rect x="0.6" y="0.6" width="14" height="15" fill="none" stroke="#000" stroke-width="1.2"/><path d="M7.6 1 L7.6 15.5 M1 8 L14.5 8 M1.5 5 L5 1.5" fill="none" stroke="#000" stroke-width="1.1"/></svg></div></div>
<div style="left:103px;top:738px;width:48px;height:31px;background:#ffffdc;"></div>
<span class="m" style="left:106px;top:747.5px;font-size:12px;letter-spacing:0px">X Y :</span>
<div style="left:152px;top:739px;width:171px;height:30px;background:#ffffd6;border-style:solid;border-width:2px;border-color:#e8e8bc #e8e8bc #e8e8bc #e8e8bc;"><div style="left:0px;top:0px;width:167px;height:26px;background:#ffffde;border-style:solid;border-width:2px;border-color:#c6c698 #fffff0 #fffff0 #c6c698;"></div></div>
<svg style="left:158px;top:741px;" width="6" height="14"><path d="M3 1 L3 12" stroke="#000" stroke-width="1" stroke-dasharray="1 1"/><path d="M1 0.5 L3 2 L5 0.5 M1 12.5 L3 11 L5 12.5" stroke="#000" stroke-width=".8" fill="none"/></svg>
<div style="left:324px;top:737px;width:1px;height:33px;background:#8aa8a0;"></div>
<div style="left:355px;top:737px;width:1px;height:33px;background:#8aa8a0;"></div>
<div style="left:326px;top:738px;width:29px;height:32px;background:#5ccbb0;"><div style="left:3px;top:3px;width:23px;height:26px;background:#ffffd6;border-style:solid;border-width:2px;border-color:#fffff0 #c6c698 #c6c698 #fffff0;"><svg style="left:1px;top:2px;" width="17" height="19"><rect x="0.6" y="0.6" width="15" height="15.4" fill="none" stroke="#000" stroke-width="1.2"/><path d="M8 2.6 L8 10.5" stroke="#000" stroke-width="1.8"/><rect x="7" y="12" width="2" height="2" fill="#000"/></svg></div></div>
<span class="m" style="left:360px;top:748.3px;font-size:12px;letter-spacing:-0.22px">&lt;M1&gt; - Select first area corner</span>
<div style="left:1527px;top:737px;width:73px;height:33px;background:#5ccbb0;border-left:1px solid #000;"></div>
<div style="left:1535px;top:740px;width:70px;height:27px;background:#5ccbb0;border-style:solid;border-width:2px;border-color:#b4f0e2 #2f7d6b #2f7d6b #b4f0e2;"><span class="m" style="left:4.5px;top:5px;font-size:14.6px;">Inch</span></div>
<div style="left:1586px;top:750px;width:12px;height:6px;background:#5ccbb0;border-style:solid;border-width:1px;border-color:#b4f0e2 #2f6d5f #2f6d5f #b4f0e2;"></div>
<div style="left:8px;top:769px;width:1592px;height:2px;background:#000;"></div>
<div style="left:8px;top:769px;width:65px;height:1px;background:#fffff0;"></div>
<div style="left:8px;top:771px;width:1592px;height:2.5px;background:#6a9a94;"></div>
<div style="left:8px;top:773.5px;width:1592px;height:1px;background:#000;"></div>
<div style="left:8px;top:774.5px;width:1592px;height:23px;background:#b6ffff;"></div>
<div style="left:8px;top:771px;width:2.5px;height:27px;background:#6a9a94;"></div>
<div style="left:10.5px;top:773.5px;width:1px;height:24px;background:#000;"></div>
<div style="left:14px;top:795px;width:1586px;height:1.5px;background:#5a9a94;"></div>
<div style="left:8px;top:796.5px;width:1592px;height:1.5px;background:#dcffff;"></div>
<div style="left:8px;top:798px;width:1592px;height:1.5px;background:#000;"></div>
<div style="left:6px;top:799.5px;width:1594px;height:2.5px;background:#f4fbff;"></div>
<div style="left:0px;top:802px;width:1600px;height:6px;background:linear-gradient(180deg,#3f8ccc 0,#2f78bc 40%,#4a98d4 70%,#2a6cae 100%);"></div>
<div style="left:0px;top:808px;width:1600px;height:2px;background:#0a1420;"></div>
<!-- s_task -->
<div style="left:0px;top:810px;width:1600px;height:30px;background:linear-gradient(90deg,#2f6a98 0,#3a76a4 12%,#3a74a2 45%,#34709e 70%,#1f4f80 90%,#1c4a7a 100%);"></div>
<div style="left:0px;top:810px;width:1600px;height:30px;background:linear-gradient(180deg,rgba(255,255,255,.25) 0,rgba(255,255,255,.08) 2px,rgba(255,255,255,0) 50%,rgba(0,0,20,.12) 100%);"></div>
<svg style="left:7px;top:804px;" width="40" height="40"><defs><radialGradient id="og" cx="50%" cy="70%" r="65%"><stop offset="0" stop-color="#48c0f0"/><stop offset=".5" stop-color="#175a9c"/><stop offset="1" stop-color="#0c2c58"/></radialGradient></defs><circle cx="20" cy="20" r="18.5" fill="url(#og)" stroke="#6c9cc8" stroke-width="1.2"/><path d="M5 13 Q20 2 35 13 Q20 9 5 13 Z" fill="rgba(255,255,255,.3)"/><path d="M12 12.5 Q15.5 10.5 19 12.5 L17.8 19 Q14.5 17.4 11 19 Z" fill="#f0642c"/><path d="M20.4 13 Q24 15 27.6 12.6 L26.4 19 Q23 21 19.4 19.4 Z" fill="#8cc83c"/><path d="M10.6 20.6 Q14 18.8 17.4 20.6 L16.2 27 Q13 25.2 9.6 27 Z" fill="#3c9ce8"/><path d="M19 21 Q22.4 23 26 21 L24.8 27.4 Q21.4 29.2 18 27.4 Z" fill="#fcc82c"/></svg>
<div class="tbb" style="left:60px;top:811px;width:88px;height:28px;background:linear-gradient(180deg,rgba(255,255,255,.40) 0,rgba(255,255,255,.24) 45%,rgba(255,255,255,.10) 52%,rgba(255,255,255,.04) 100%);"><svg style="left:7px;top:5px;" width="17" height="17"><path d="M13.5 1 Q11 1.2 10.2 3.6 Q5 2.6 2.6 6.8 Q0.6 11 3.6 14 Q7 16.6 11 14.6 Q14 12.6 13.4 8.4 L7.4 8.4 L7.4 10.8 L10.4 10.8 Q10 12.6 7.6 12.8 Q4.8 12.6 4.6 9.6 Q4.8 6.2 8.4 6 Q11.8 6.4 13 4.6 Q13.8 3 13.5 1 Z" fill="#e02818"/></svg><span class="tbt" style="left:25px;top:7.3px">Foxmail</span></div>
<svg style="left:162px;top:816px;" width="17" height="17"><rect x="1" y="1" width="14" height="15" fill="#f4f4f4" stroke="#c0c0c0" stroke-width=".6"/><path d="M8 2 Q4 6 2 13 L7 14.5 Z" fill="#28a040"/><path d="M8 2 Q12.5 6 14 13 L8 15 Z" fill="#e03020"/><circle cx="4.5" cy="5" r="2" fill="#28a040"/></svg>
<svg style="left:202px;top:815px;" width="17" height="17"><rect x="2" y="0.5" width="12" height="16" fill="#d8e4f4" stroke="#7088b0" stroke-width=".8"/><rect x="3.5" y="2" width="9" height="3.5" fill="#f8fcff" stroke="#8098c0" stroke-width=".5"/><g fill="#5078c0"><rect x="3.5" y="7" width="2" height="2"/><rect x="7" y="7" width="2" height="2"/><rect x="10.5" y="7" width="2" height="2"/><rect x="3.5" y="10" width="2" height="2"/><rect x="7" y="10" width="2" height="2"/><rect x="10.5" y="10" width="2" height="2"/><rect x="3.5" y="13" width="2" height="2"/><rect x="7" y="13" width="2" height="2"/></g><rect x="10.5" y="13" width="2" height="2" fill="#e0a020"/></svg>
<div class="tbb" style="left:232px;top:811px;width:88px;height:28px;background:linear-gradient(180deg,rgba(255,255,255,.40) 0,rgba(255,255,255,.24) 45%,rgba(255,255,255,.10) 52%,rgba(255,255,255,.04) 100%);"><svg style="left:7px;top:5px;" width="17" height="17"><path d="M1 1 H13 L15.5 3.5 V15.5 H1 Z" fill="#2838b8" stroke="#101870" stroke-width=".8"/><rect x="4" y="1.5" width="7" height="4.5" fill="#e8e8f0"/><rect x="3" y="8.5" width="10.5" height="7" fill="#fff"/><path d="M3 10.5 H13.5 M3 12.5 H13.5" stroke="#e02020" stroke-width="1"/></svg><span class="tbt" style="left:25px;top:7.3px">Total C...</span></div>
<div class="tbb" style="left:324px;top:811px;width:88px;height:28px;background:linear-gradient(180deg,rgba(255,255,255,.40) 0,rgba(255,255,255,.24) 45%,rgba(255,255,255,.10) 52%,rgba(255,255,255,.04) 100%);"><svg style="left:7px;top:5px;" width="17" height="17"><polygon points="8,0.5 10.2,5.2 15.5,5.8 11.6,9.4 12.8,15 8,12.2 3.2,15 4.4,9.4 0.5,5.8 5.8,5.2" fill="#f08018" stroke="#c05000" stroke-width=".8"/><circle cx="8" cy="8.5" r="3" fill="#ffd040"/><text x="8" y="11" text-anchor="middle" font-family="Liberation Sans,sans-serif" font-size="6" font-weight="bold" fill="#c03000">A</text></svg><span class="tbt" style="left:25px;top:7.3px">兴森快...</span></div>
<div class="tbb" style="left:416px;top:811px;width:88px;height:28px;background:linear-gradient(180deg,rgba(255,255,255,.40) 0,rgba(255,255,255,.24) 45%,rgba(255,255,255,.10) 52%,rgba(255,255,255,.04) 100%);"><svg style="left:7px;top:5px;" width="17" height="17"><path d="M3 16 L6.5 1.5 H15.5 L14.5 5 H9.5 L9 7.5 H13.5 L12.8 10.5 H8.2 L7 16 Z" fill="#fff" stroke="#108830" stroke-width="2" stroke-linejoin="round"/></svg><span class="tbt" style="left:25px;top:7.3px">EDS工程...</span></div>
<div class="tbb" style="left:508px;top:811px;width:88px;height:28px;background:linear-gradient(180deg,rgba(255,255,255,.40) 0,rgba(255,255,255,.24) 45%,rgba(255,255,255,.10) 52%,rgba(255,255,255,.04) 100%);"><svg style="left:7px;top:5px;" width="17" height="17"><rect x="2" y="1" width="12" height="15" fill="#f8fcff" stroke="#3870c0" stroke-width="1"/><path d="M4 4 H12 M4 6.5 H12 M4 9 H12 M4 11.5 H12 M4 14 H12" stroke="#2060c0" stroke-width="1.2"/></svg><span class="tbt" style="left:25px;top:7.3px">制作规...</span></div>
<div class="tbb" style="left:600px;top:811px;width:88px;height:28px;background:linear-gradient(180deg,rgba(255,255,255,.40) 0,rgba(255,255,255,.24) 45%,rgba(255,255,255,.10) 52%,rgba(255,255,255,.04) 100%);"><svg style="left:7px;top:5px;" width="17" height="17"><rect x="4" y="2" width="11" height="14" fill="#f4f8ff" stroke="#8090b0" stroke-width=".8"/><path d="M6 5 H13 M6 7.5 H13 M6 10 H13 M6 12.5 H13" stroke="#90a4d0" stroke-width=".8"/><rect x="0.5" y="3.5" width="9" height="9" fill="#2a56b0" stroke="#143a80" stroke-width=".8"/><text x="5" y="11" text-anchor="middle" font-family="Liberation Sans,sans-serif" font-size="8" font-weight="bold" fill="#fff">W</text></svg><span class="tbt" style="left:25px;top:7.3px">201309...</span></div>
<div class="tbb" style="left:692px;top:811px;width:88px;height:28px;background:linear-gradient(180deg,rgba(255,255,255,.40) 0,rgba(255,255,255,.24) 45%,rgba(255,255,255,.10) 52%,rgba(255,255,255,.04) 100%);"><svg style="left:7px;top:5px;" width="19" height="17"><circle cx="9" cy="9" r="6.5" fill="#1880a0" stroke="#0a3a50" stroke-width="1"/><circle cx="9" cy="9" r="3.6" fill="#80e040" stroke="#206010" stroke-width=".8"/><path d="M1.5 5 Q4 0.5 9 1.5" stroke="#60c0e0" stroke-width="1.6" fill="none"/><rect x="7.5" y="7.5" width="3" height="3" fill="#f0f040"/></svg><span class="tbt" style="left:27px;top:7.3px">Genesis</span></div>
<div class="tbb" style="left:782px;top:811px;width:445px;height:28px;background:linear-gradient(180deg,rgba(255,255,255,.40) 0,rgba(255,255,255,.24) 45%,rgba(255,255,255,.10) 52%,rgba(255,255,255,.04) 100%);"></div>
<div class="tbb" style="left:782px;top:811px;width:88px;height:28px;background:transparent;border-color:transparent;box-shadow:none;"><svg style="left:7px;top:5px;" width="17" height="17"><rect x="0.5" y="1.5" width="15" height="13" fill="#f4f4f4" stroke="#303030" stroke-width="1"/><rect x="1" y="2" width="14" height="2.4" fill="#202080"/><path d="M4 6.5 L12 13 M12 6.5 L4 13" stroke="#b0b800" stroke-width="2.4"/><path d="M4 6.5 L12 13 M12 6.5 L4 13" stroke="#606800" stroke-width=".7" fill="none" opacity=".5"/></svg><span class="tbt" style="left:25px;top:7.3px">Enginee...</span></div>
<div class="tbb" style="left:870px;top:811px;width:89px;height:28px;background:transparent;border-color:transparent;box-shadow:none;"><svg style="left:7px;top:5px;" width="17" height="17"><rect x="0.5" y="1.5" width="15" height="13" fill="#f4f4f4" stroke="#303030" stroke-width="1"/><rect x="1" y="2" width="14" height="2.4" fill="#202080"/><path d="M4 6.5 L12 13 M12 6.5 L4 13" stroke="#b0b800" stroke-width="2.4"/><path d="M4 6.5 L12 13 M12 6.5 L4 13" stroke="#606800" stroke-width=".7" fill="none" opacity=".5"/></svg><span class="tbt" style="left:25px;top:7.3px">Progress</span></div>
<div class="tbb" style="left:960px;top:811px;width:89px;height:28px;background:transparent;border-color:transparent;box-shadow:none;"><svg style="left:7px;top:5px;" width="17" height="17"><rect x="0.5" y="1.5" width="15" height="13" fill="#f4f4f4" stroke="#303030" stroke-width="1"/><rect x="1" y="2" width="14" height="2.4" fill="#202080"/><path d="M4 6.5 L12 13 M12 6.5 L4 13" stroke="#b0b800" stroke-width="2.4"/><path d="M4 6.5 L12 13 M12 6.5 L4 13" stroke="#606800" stroke-width=".7" fill="none" opacity=".5"/></svg><span class="tbt" style="left:25px;top:7.3px">Job Ma...</span></div>
<div class="tbb" style="left:1050px;top:811px;width:88px;height:28px;background:transparent;border-color:transparent;box-shadow:none;"><svg style="left:7px;top:5px;" width="17" height="17"><rect x="0.5" y="1.5" width="15" height="13" fill="#f4f4f4" stroke="#303030" stroke-width="1"/><rect x="1" y="2" width="14" height="2.4" fill="#202080"/><path d="M4 6.5 L12 13 M12 6.5 L4 13" stroke="#b0b800" stroke-width="2.4"/><path d="M4 6.5 L12 13 M12 6.5 L4 13" stroke="#606800" stroke-width=".7" fill="none" opacity=".5"/></svg><span class="tbt" style="left:25px;top:7.3px">Drill To...</span></div>
<div class="tbb" style="left:1139px;top:811px;width:88px;height:28px;background:linear-gradient(180deg,rgba(255,255,255,.62) 0,rgba(255,255,255,.44) 45%,rgba(255,255,255,.28) 52%,rgba(255,255,255,.36) 100%);"><svg style="left:7px;top:5px;" width="17" height="17"><rect x="0.5" y="1.5" width="15" height="13" fill="#f4f4f4" stroke="#303030" stroke-width="1"/><rect x="1" y="2" width="14" height="2.4" fill="#202080"/><path d="M4 6.5 L12 13 M12 6.5 L4 13" stroke="#b0b800" stroke-width="2.4"/><path d="M4 6.5 L12 13 M12 6.5 L4 13" stroke="#606800" stroke-width=".7" fill="none" opacity=".5"/></svg><span class="tbt" style="left:25px;top:7.3px">Graphic...</span></div>
<div class="tbb" style="left:1230px;top:811px;width:177px;height:28px;background:linear-gradient(180deg,rgba(255,255,255,.40) 0,rgba(255,255,255,.24) 45%,rgba(255,255,255,.10) 52%,rgba(255,255,255,.04) 100%);"></div>
<div class="tbb" style="left:1230px;top:811px;width:89px;height:28px;background:transparent;border-color:transparent;box-shadow:none;"><svg style="left:7px;top:5px;" width="17" height="17"><rect x="4" y="3" width="10" height="13" fill="#e8f0ff" stroke="#8090b0" stroke-width=".8"/><rect x="0.5" y="1" width="10" height="10" fill="#2a8a3a" stroke="#145a20" stroke-width=".8"/><path d="M3 3.5 L8 8.5 M8 3.5 L3 8.5" stroke="#fff" stroke-width="1.6"/></svg><span class="tbt" style="left:25px;top:7.3px">8S7MD...</span></div>
<div class="tbb" style="left:1319px;top:811px;width:88px;height:28px;background:transparent;border-color:transparent;box-shadow:none;"><svg style="left:7px;top:5px;" width="17" height="17"><rect x="4" y="3" width="10" height="13" fill="#e8f0ff" stroke="#8090b0" stroke-width=".8"/><rect x="0.5" y="1" width="10" height="10" fill="#2a8a3a" stroke="#145a20" stroke-width=".8"/><path d="M3 3.5 L8 8.5 M8 3.5 L3 8.5" stroke="#fff" stroke-width="1.6"/></svg><span class="tbt" style="left:25px;top:7.3px">8S7MD...</span></div>
<svg style="left:1420px;top:816px;" width="17" height="16"><rect x="0.5" y="5.5" width="15" height="9" rx="1" fill="#c8c8c0" stroke="#787870" stroke-width="1"/><path d="M2.5 8 H13.5 M2.5 10 H13.5 M3.5 12 H12.5" stroke="#686860" stroke-width="1" stroke-dasharray="1.4 .8"/><path d="M8 5 Q8 2 12 1" stroke="#a0a098" stroke-width="1" fill="none"/></svg>
<svg style="left:1441px;top:814px;" width="18" height="18"><circle cx="9" cy="9" r="8" fill="#1a28b8" stroke="#c8d4f0" stroke-width="1.4"/><text x="9" y="13.6" text-anchor="middle" font-family="Liberation Sans,sans-serif" font-size="13" font-weight="bold" fill="#fff">?</text></svg>
<svg style="left:1466px;top:812px;" width="12" height="20"><rect x="3.5" y="1.5" width="6" height="4" fill="none" stroke="#fff" stroke-width="1.2"/><rect x="1.5" y="4.5" width="6" height="4" fill="#2a5a8a" stroke="#fff" stroke-width="1.2"/><polygon points="2.5,14 8.5,14 5.5,17.5" fill="#fff"/></svg>
<svg style="left:1485px;top:822px;" width="10" height="8"><polygon points="5,0.5 9.5,6.5 0.5,6.5" fill="#fff"/></svg>
<svg style="left:1507px;top:815px;" width="18" height="20"><circle cx="9" cy="10" r="8" fill="#38a8e8"/><path d="M3 6 L13 5 L15 12 L10 11 L11 17 L7 12 Z" fill="#fff"/></svg>
<span class="tbt" style="left:1542.5px;top:819.3px;font-size:12.3px">17:34</span>
<div style="left:1587px;top:810px;width:13px;height:30px;background:linear-gradient(90deg,rgba(255,255,255,.25),rgba(255,255,255,.08));border-left:1px solid rgba(255,255,255,.45);"></div>
</body></html>
